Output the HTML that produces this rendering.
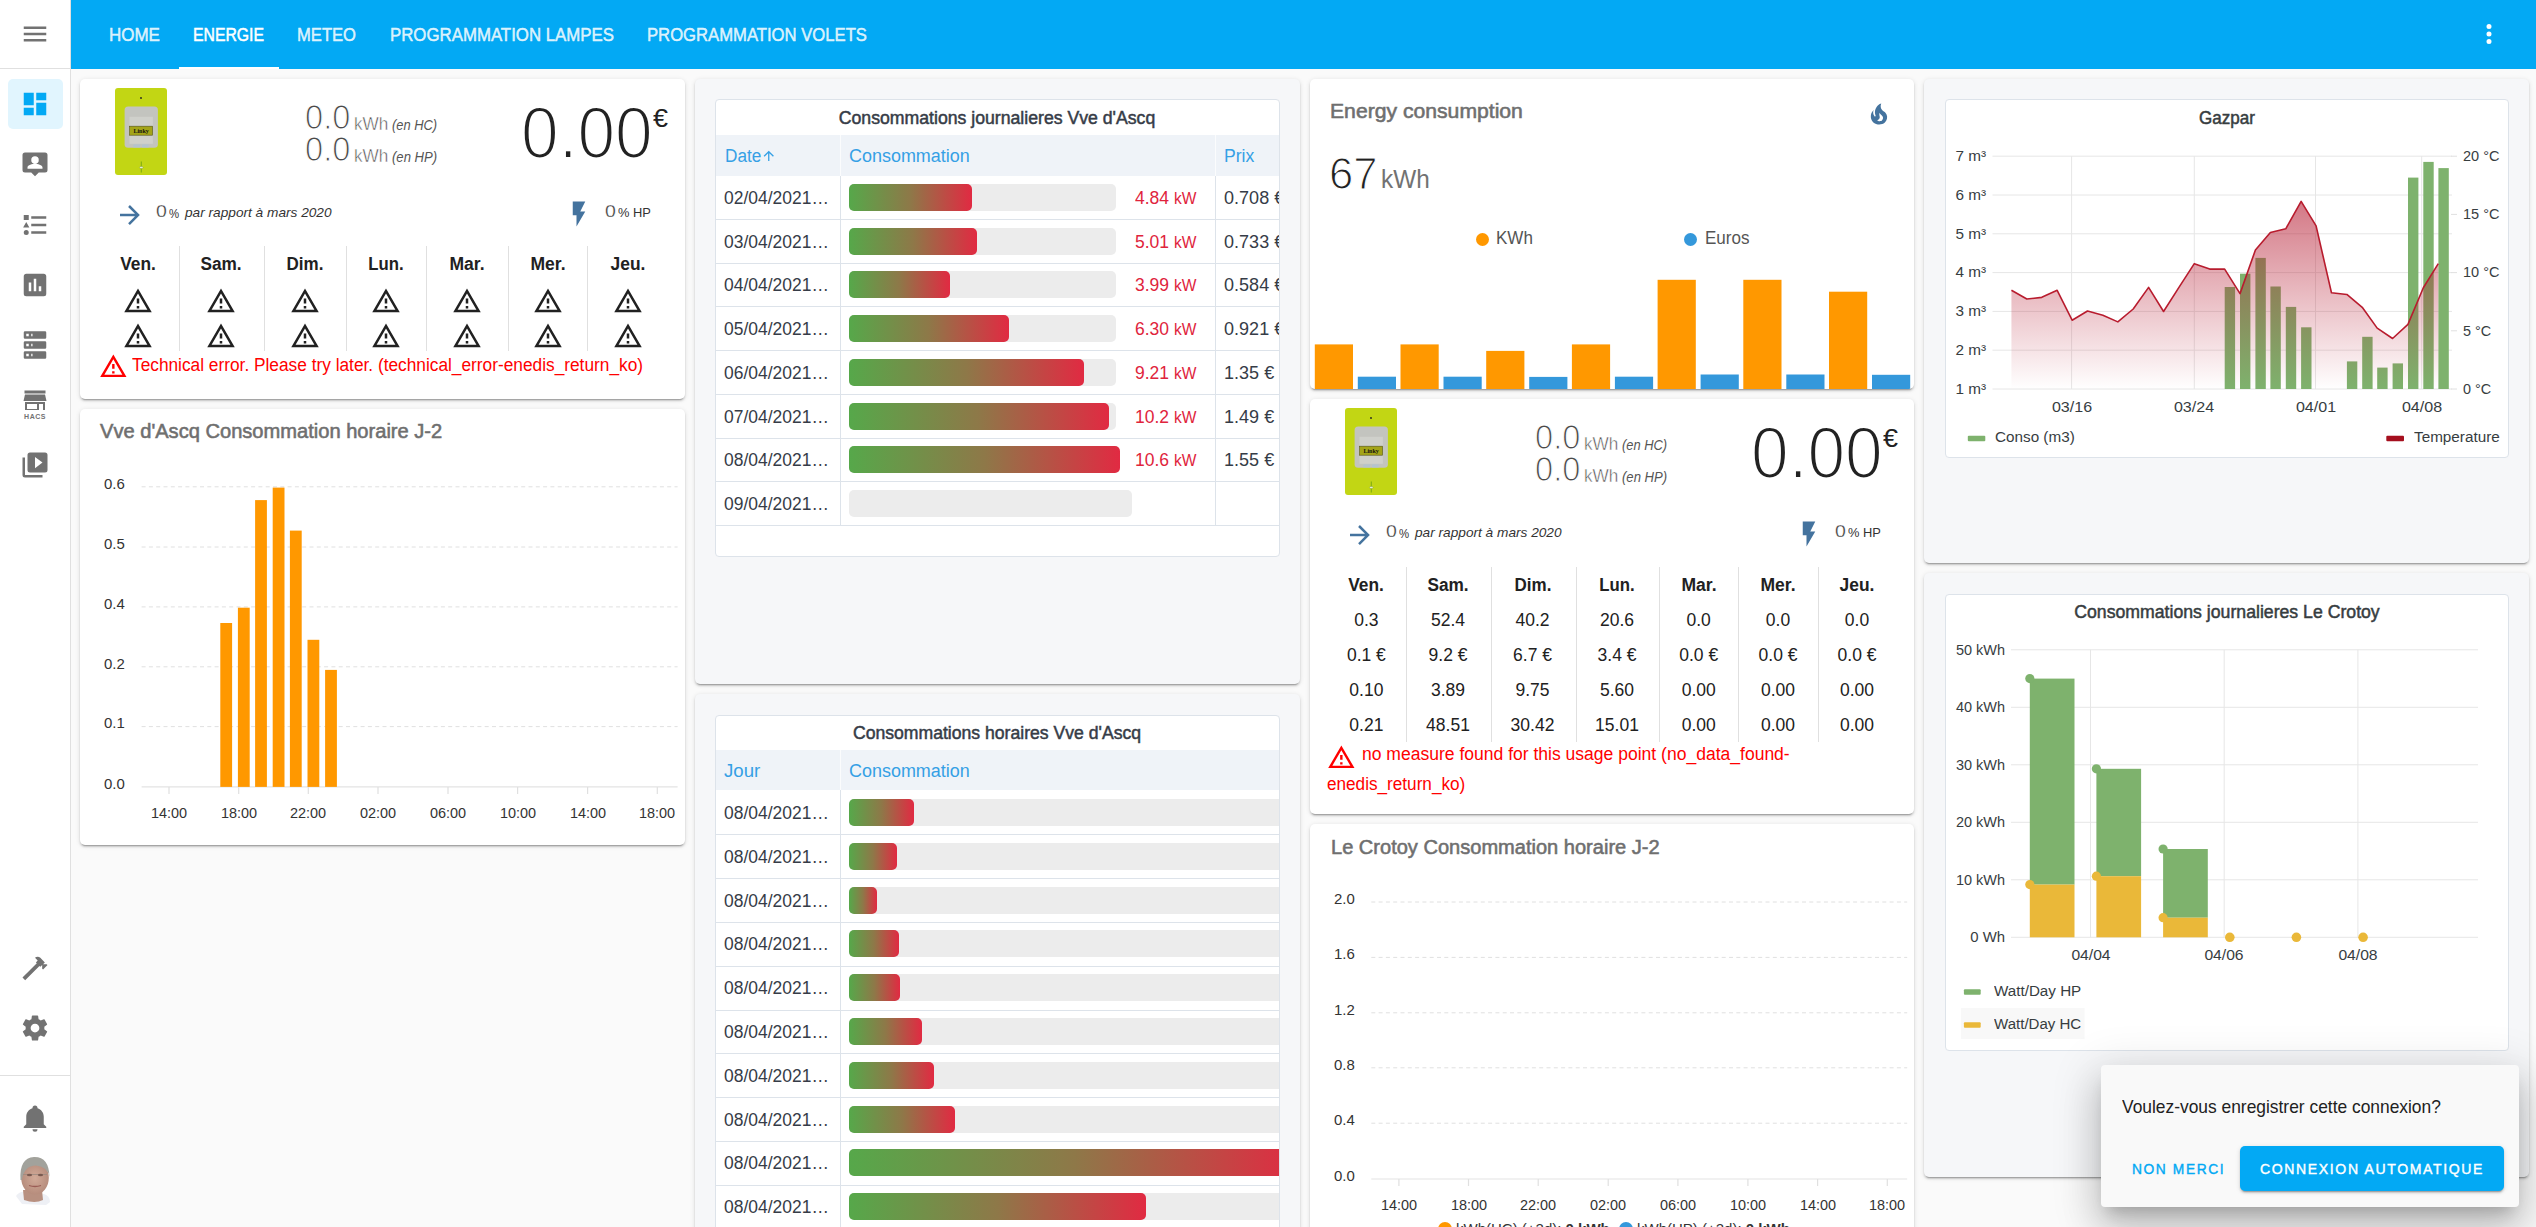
<!DOCTYPE html>
<html><head><meta charset="utf-8"><style>
html,body{margin:0;padding:0;width:2536px;height:1227px;overflow:hidden;background:#fafafa;font-family:"Liberation Sans", sans-serif;}
div,span{box-sizing:border-box;}
</style></head><body>
<div style="position:absolute;left:0.00px;top:0.00px;width:70.00px;height:1227.00px;background:#fff;"></div><div style="position:absolute;left:70.00px;top:0.00px;width:1.00px;height:1227.00px;background:#e0e0e0;"></div><div style="position:absolute;left:0.00px;top:68.00px;width:70.00px;height:1.00px;background:#e0e0e0;"></div><svg style="position:absolute;left:20.00px;top:19.00px;" width="30" height="30" viewBox="0 0 24 24"><path fill="#727272" d="M3,6H21V8H3V6M3,11H21V13H3V11M3,16H21V18H3V16Z"/></svg><div style="position:absolute;left:8.00px;top:79.00px;width:55.00px;height:50.00px;background:#e1f5fe;border-radius:5px;"></div><svg style="position:absolute;left:20.00px;top:89.00px;" width="30" height="30" viewBox="0 0 24 24"><path fill="#03a9f4" d="M13,3V9H21V3M13,21H21V11H13M3,21H11V15H3M3,13H11V3H3V13Z"/></svg><svg style="position:absolute;left:20.00px;top:149.50px;" width="30" height="30" viewBox="0 0 24 24"><path fill="#727272" d="M20,2H4A2,2 0 0,0 2,4V16A2,2 0 0,0 4,18H9L12,21L15,18H20A2,2 0 0,0 22,16V4A2,2 0 0,0 20,2M12,5A3,3 0 0,1 15,8A3,3 0 0,1 12,11A3,3 0 0,1 9,8A3,3 0 0,1 12,5M18,15H6V14C6,12 10,11 12,11C14,11 18,12 18,14V15Z"/></svg><svg style="position:absolute;left:20.00px;top:209.50px;" width="30" height="30" viewBox="0 0 24 24"><path fill="#727272" d="M5,9.5L7.5,14H2.5L5,9.5M3,4H7V8H3V4M5,20A2,2 0 0,0 7,18A2,2 0 0,0 5,16A2,2 0 0,0 3,18A2,2 0 0,0 5,20M9,5V7H21V5H9M9,19H21V17H9V19M9,13H21V11H9V13Z"/></svg><svg style="position:absolute;left:20.00px;top:270.00px;" width="30" height="30" viewBox="0 0 24 24"><path fill="#727272" d="M19,3H5C3.89,3 3,3.89 3,5V19A2,2 0 0,0 5,21H19A2,2 0 0,0 21,19V5C21,3.89 20.1,3 19,3M9,17H7V10H9V17M13,17H11V7H13V17M17,17H15V13H17V17Z"/></svg><svg style="position:absolute;left:20.00px;top:330.00px;" width="30" height="30" viewBox="0 0 24 24"><path fill="#727272" d="M4,1H20A1,1 0 0,1 21,2V6A1,1 0 0,1 20,7H4A1,1 0 0,1 3,6V2A1,1 0 0,1 4,1M4,9H20A1,1 0 0,1 21,10V14A1,1 0 0,1 20,15H4A1,1 0 0,1 3,14V10A1,1 0 0,1 4,9M4,17H20A1,1 0 0,1 21,18V22A1,1 0 0,1 20,23H4A1,1 0 0,1 3,22V18A1,1 0 0,1 4,17M9,5H10V3H9V5M9,13H10V11H9V13M9,21H10V19H9V21M5,3V5H7V3H5M5,11V13H7V11H5M5,19V21H7V19H5Z"/></svg><svg style="position:absolute;left:20.00px;top:388.00px;" width="30" height="34" viewBox="0 0 30 34"><rect x="4.5" y="2.5" width="21" height="3" fill="#727272"/>
<path d="M5 6.5H25L26.5 13H3.5Z" fill="#727272"/>
<rect x="5" y="14" width="20" height="8" fill="#727272"/>
<rect x="7" y="16" width="10" height="5" fill="#fff"/>
<rect x="19" y="16" width="4" height="6" fill="#fff"/>
<text x="15" y="31" font-family="Liberation Sans" font-weight="bold" font-size="7" text-anchor="middle" fill="#727272" letter-spacing="0.5">HACS</text></svg><svg style="position:absolute;left:20.00px;top:450.00px;" width="30" height="30" viewBox="0 0 24 24"><path fill="#727272" d="M4,6H2V20A2,2 0 0,0 4,22H18V20H4V6M20,2H8A2,2 0 0,0 6,4V16A2,2 0 0,0 8,18H20A2,2 0 0,0 22,16V4A2,2 0 0,0 20,2M12,14.5V5.5L18,10L12,14.5Z"/></svg><svg style="position:absolute;left:20.00px;top:953.00px;" width="30" height="30" viewBox="0 0 24 24"><path fill="#727272" d="M2,19.63L13.43,8.2L12.72,7.5L14.14,6.07L12,3.89C13.2,2.7 15.09,2.7 16.27,3.89L19.87,7.5L18.45,8.91H21.29L22,9.62L18.45,13.21L17.74,12.5V9.62L16.27,11.04L15.56,10.33L4.13,21.76L2,19.63Z"/></svg><svg style="position:absolute;left:20.00px;top:1013.00px;" width="30" height="30" viewBox="0 0 24 24"><path fill="#727272" d="M12,15.5A3.5,3.5 0 0,1 8.5,12A3.5,3.5 0 0,1 12,8.5A3.5,3.5 0 0,1 15.5,12A3.5,3.5 0 0,1 12,15.5M19.43,12.97C19.47,12.65 19.5,12.33 19.5,12C19.5,11.67 19.47,11.34 19.43,11L21.54,9.37C21.73,9.22 21.78,8.95 21.66,8.73L19.66,5.27C19.54,5.05 19.27,4.96 19.05,5.05L16.56,6.05C16.04,5.66 15.5,5.32 14.87,5.07L14.5,2.42C14.46,2.18 14.25,2 14,2H10C9.75,2 9.54,2.18 9.5,2.42L9.13,5.07C8.5,5.32 7.96,5.66 7.44,6.05L4.95,5.05C4.73,4.96 4.46,5.05 4.34,5.27L2.34,8.73C2.21,8.95 2.27,9.22 2.46,9.37L4.57,11C4.53,11.34 4.5,11.67 4.5,12C4.5,12.33 4.53,12.65 4.57,12.97L2.46,14.63C2.27,14.78 2.21,15.05 2.34,15.27L4.34,18.73C4.46,18.95 4.73,19.03 4.95,18.95L7.44,17.94C7.96,18.34 8.5,18.68 9.13,18.93L9.5,21.58C9.54,21.82 9.75,22 10,22H14C14.25,22 14.46,21.82 14.5,21.58L14.87,18.93C15.5,18.67 16.04,18.34 16.56,17.94L19.05,18.95C19.27,19.03 19.54,18.95 19.66,18.73L21.66,15.27C21.78,15.05 21.73,14.78 21.54,14.63L19.43,12.97Z"/></svg><div style="position:absolute;left:0.00px;top:1075.00px;width:70.00px;height:1.00px;background:#e0e0e0;"></div><svg style="position:absolute;left:20.00px;top:1103.00px;" width="30" height="30" viewBox="0 0 24 24"><path fill="#727272" d="M21,19V20H3V19L5,17V11C5,7.9 7.03,5.17 10,4.29C10,4.19 10,4.1 10,4A2,2 0 0,1 12,2A2,2 0 0,1 14,4C14,4.1 14,4.19 14,4.29C16.97,5.17 19,7.9 19,11V17L21,19M14,21A2,2 0 0,1 12,23A2,2 0 0,1 10,21"/></svg><svg style="position:absolute;left:10.00px;top:1150.00px;" width="50" height="60" viewBox="0 0 50 60">
<defs><radialGradient id="skin" cx="50%" cy="50%" r="55%"><stop offset="0" stop-color="#d2aa98"/><stop offset="1" stop-color="#b48a7a"/></radialGradient></defs>
<path d="M6 46 Q10 41 15 42 L34 44 Q40 46 40 52 L36 55 L12 54Z" fill="#eef0f5"/>
<path d="M13 40 L32 40 L33 50 Q25 54 14 50Z" fill="#b89080"/>
<ellipse cx="25" cy="28" rx="13.8" ry="16.5" fill="url(#skin)"/>
<path d="M10.5 30 Q9 8 24 7 Q39 6.5 39.5 27 Q38 17 26 15.5 Q14 15.5 12 30Z" fill="#a2a29c"/>
<path d="M13 24.5 H37" stroke="#9a8a80" stroke-width="0.8"/>
<ellipse cx="19.5" cy="25" rx="2.6" ry="1.2" fill="#7a5a50"/>
<ellipse cx="30.5" cy="25" rx="2.6" ry="1.2" fill="#7a5a50"/>
<path d="M19 35.5 Q25 37.5 31 35.5" stroke="#9a5d55" stroke-width="1.3" fill="none"/>
</svg><div style="position:absolute;left:71.00px;top:0.00px;width:2465.00px;height:69.00px;background:#03a9f4;"></div><div style="position:absolute;left:109.00px;top:25.90px;white-space:nowrap;font-size:18px;line-height:18px;color:rgba(255,255,255,0.82);font-weight:400;-webkit-text-stroke:0.50px rgba(255,255,255,0.82);transform:scaleX(0.9434);transform-origin:0 0;"><span id="t7598f7d98d">HOME</span></div><div style="position:absolute;left:193.20px;top:25.90px;white-space:nowrap;font-size:18px;line-height:18px;color:#fff;font-weight:400;-webkit-text-stroke:0.50px #fff;transform:scaleX(0.8755);transform-origin:0 0;"><span id="t44b9bff7a6">ENERGIE</span></div><div style="position:absolute;left:297.20px;top:25.90px;white-space:nowrap;font-size:18px;line-height:18px;color:rgba(255,255,255,0.82);font-weight:400;-webkit-text-stroke:0.50px rgba(255,255,255,0.82);transform:scaleX(0.9223);transform-origin:0 0;"><span id="t91ddcdd41f">METEO</span></div><div style="position:absolute;left:390.20px;top:25.90px;white-space:nowrap;font-size:18px;line-height:18px;color:rgba(255,255,255,0.82);font-weight:400;-webkit-text-stroke:0.50px rgba(255,255,255,0.82);transform:scaleX(0.9342);transform-origin:0 0;"><span id="tc95830f0d5">PROGRAMMATION LAMPES</span></div><div style="position:absolute;left:647.10px;top:25.90px;white-space:nowrap;font-size:18px;line-height:18px;color:rgba(255,255,255,0.82);font-weight:400;-webkit-text-stroke:0.50px rgba(255,255,255,0.82);transform:scaleX(0.9253);transform-origin:0 0;"><span id="ta40585232f">PROGRAMMATION VOLETS</span></div><div style="position:absolute;left:179.00px;top:66.50px;width:100.00px;height:2.50px;background:#fff;"></div><svg style="position:absolute;left:2474.00px;top:19.00px;" width="30" height="30" viewBox="0 0 24 24"><path fill="#fff" d="M12,16A2,2 0 0,1 14,18A2,2 0 0,1 12,20A2,2 0 0,1 10,18A2,2 0 0,1 12,16M12,10A2,2 0 0,1 14,12A2,2 0 0,1 12,14A2,2 0 0,1 10,12A2,2 0 0,1 12,10M12,4A2,2 0 0,1 14,6A2,2 0 0,1 12,8A2,2 0 0,1 10,6A2,2 0 0,1 12,4Z"/></svg><div style="position:absolute;left:80.00px;top:79.00px;width:605.00px;height:320.00px;background:#fff;box-shadow:0 2px 2px 0 rgba(0,0,0,0.14),0 1px 5px 0 rgba(0,0,0,0.12),0 3px 1px -2px rgba(0,0,0,0.2);border-radius:5px;"></div><div style="position:absolute;left:80.00px;top:409.00px;width:605.00px;height:436.00px;background:#fff;box-shadow:0 2px 2px 0 rgba(0,0,0,0.14),0 1px 5px 0 rgba(0,0,0,0.12),0 3px 1px -2px rgba(0,0,0,0.2);border-radius:5px;"></div><div style="position:absolute;left:695.00px;top:79.00px;width:605.00px;height:605.00px;background:#f6f7f9;box-shadow:0 2px 2px 0 rgba(0,0,0,0.14),0 1px 5px 0 rgba(0,0,0,0.12),0 3px 1px -2px rgba(0,0,0,0.2);border-radius:5px;"></div><div style="position:absolute;left:695.00px;top:694.00px;width:605.00px;height:600.00px;background:#f6f7f9;box-shadow:0 2px 2px 0 rgba(0,0,0,0.14),0 1px 5px 0 rgba(0,0,0,0.12),0 3px 1px -2px rgba(0,0,0,0.2);border-radius:5px;"></div><div style="position:absolute;left:1310.00px;top:79.00px;width:604.00px;height:310.00px;background:#fff;box-shadow:0 2px 2px 0 rgba(0,0,0,0.14),0 1px 5px 0 rgba(0,0,0,0.12),0 3px 1px -2px rgba(0,0,0,0.2);border-radius:5px;overflow:hidden;"></div><div style="position:absolute;left:1310.00px;top:399.00px;width:604.00px;height:415.00px;background:#fff;box-shadow:0 2px 2px 0 rgba(0,0,0,0.14),0 1px 5px 0 rgba(0,0,0,0.12),0 3px 1px -2px rgba(0,0,0,0.2);border-radius:5px;"></div><div style="position:absolute;left:1310.00px;top:824.00px;width:604.00px;height:500.00px;background:#fff;box-shadow:0 2px 2px 0 rgba(0,0,0,0.14),0 1px 5px 0 rgba(0,0,0,0.12),0 3px 1px -2px rgba(0,0,0,0.2);border-radius:5px;"></div><div style="position:absolute;left:1924.00px;top:79.00px;width:605.00px;height:484.00px;background:#f6f7f9;box-shadow:0 2px 2px 0 rgba(0,0,0,0.14),0 1px 5px 0 rgba(0,0,0,0.12),0 3px 1px -2px rgba(0,0,0,0.2);border-radius:5px;"></div><div style="position:absolute;left:1924.00px;top:573.00px;width:605.00px;height:604.00px;background:#f6f7f9;box-shadow:0 2px 2px 0 rgba(0,0,0,0.14),0 1px 5px 0 rgba(0,0,0,0.12),0 3px 1px -2px rgba(0,0,0,0.2);border-radius:5px;"></div><svg style="position:absolute;left:115.00px;top:87.80px;" width="52" height="87" viewBox="0 0 52 87"><rect x="0" y="0" width="52" height="87" rx="3" fill="#c2d614"/>
<rect x="9.6" y="18.4" width="33.3" height="41.4" rx="3.5" fill="#c3c4bf"/>
<rect x="14.5" y="28.8" width="23.4" height="27" fill="#cfd0cb"/>
<rect x="14.6" y="38.2" width="23" height="9" fill="#a4a418" stroke="#55551a" stroke-width="0.6"/>
<text x="26.1" y="45" font-family="Liberation Serif" font-weight="bold" font-size="6" text-anchor="middle" fill="#111">Linky</text>
<rect x="18.3" y="56.4" width="7" height="3" fill="#b5c3cf"/>
<rect x="27" y="56.4" width="6.6" height="3" fill="#b5c3cf"/>
<circle cx="26" cy="10" r="0.9" fill="#222"/>
<line x1="26.3" y1="73.5" x2="26.3" y2="84.5" stroke="#6aa010" stroke-width="0.8"/>
<ellipse cx="26.3" cy="79.5" rx="1.8" ry="1.1" fill="#e8eedd" stroke="#7a9a30" stroke-width="0.4"/></svg><div style="position:absolute;left:305.00px;top:100.37px;white-space:nowrap;font-size:34.5px;line-height:34.5px;color:#4a4a4a;font-weight:400;transform:scaleX(0.9456);transform-origin:0 0;-webkit-text-stroke:1.1px #fff;"><span id="t0196c07637">0.0</span></div><div style="position:absolute;left:354.00px;top:113.55px;white-space:nowrap;font-size:19px;line-height:19px;color:#4a4a4a;font-weight:400;transform:scaleX(0.9031);transform-origin:0 0;-webkit-text-stroke:0.55px #fff;"><span id="t2a356a2148">kWh</span></div><div style="position:absolute;left:391.70px;top:117.80px;white-space:nowrap;font-size:14px;line-height:14px;color:#555;font-weight:400;font-style:italic;transform:scaleX(0.9206);transform-origin:0 0;"><span id="t0342a851b9">(en HC)</span></div><div style="position:absolute;left:305.00px;top:132.48px;white-space:nowrap;font-size:34.5px;line-height:34.5px;color:#4a4a4a;font-weight:400;transform:scaleX(0.9456);transform-origin:0 0;-webkit-text-stroke:1.1px #fff;"><span id="t4cbf4c52d3">0.0</span></div><div style="position:absolute;left:354.00px;top:145.65px;white-space:nowrap;font-size:19px;line-height:19px;color:#4a4a4a;font-weight:400;transform:scaleX(0.9031);transform-origin:0 0;-webkit-text-stroke:0.55px #fff;"><span id="tf61f332b28">kWh</span></div><div style="position:absolute;left:391.70px;top:149.90px;white-space:nowrap;font-size:14px;line-height:14px;color:#555;font-weight:400;font-style:italic;transform:scaleX(0.9354);transform-origin:0 0;"><span id="t965da4ab9c">(en HP)</span></div><div style="position:absolute;left:520.70px;top:96.45px;white-space:nowrap;font-size:73px;line-height:73px;color:#222;font-weight:400;transform:scaleX(0.9272);transform-origin:0 0;-webkit-text-stroke:2.2px #fff;"><span id="tfa811fd8c3">0.00</span></div><div style="position:absolute;left:653.40px;top:104.60px;white-space:nowrap;font-size:26px;line-height:26px;color:#222;font-weight:400;transform:scaleX(1.0354);transform-origin:0 0;"><span id="t672ce63301">&euro;</span></div><svg style="position:absolute;left:114.90px;top:199.90px;" width="30" height="30" viewBox="0 0 24 24"><path fill="#44739e" d="M4,11V13H16L10.5,18.5L11.92,19.92L19.84,12L11.92,4.08L10.5,5.5L16,11H4Z"/></svg><div style="position:absolute;left:156.00px;top:203.25px;white-space:nowrap;font-size:17px;line-height:17px;color:#333;font-weight:400;transform:scaleX(1.1469);transform-origin:0 0;-webkit-text-stroke:0.3px #fff;"><span id="t581f64f4ad">0</span></div><div style="position:absolute;left:168.90px;top:206.65px;white-space:nowrap;font-size:13px;line-height:13px;color:#333;font-weight:400;transform:scaleX(0.8770);transform-origin:0 0;"><span id="t4128909561">%</span></div><div style="position:absolute;left:185.20px;top:206.22px;white-space:nowrap;font-size:13.5px;line-height:13.5px;color:#333;font-weight:400;font-style:italic;transform:scaleX(1.0120);transform-origin:0 0;"><span id="tb2a0189750">par rapport à mars 2020</span></div><svg style="position:absolute;left:564.00px;top:198.70px;" width="30" height="30" viewBox="0 0 24 24"><path fill="#44739e" d="M7,2V13H10V22L17,10H13L17,2H7Z"/></svg><div style="position:absolute;left:605.10px;top:203.25px;white-space:nowrap;font-size:17px;line-height:17px;color:#333;font-weight:400;transform:scaleX(1.1469);transform-origin:0 0;-webkit-text-stroke:0.3px #fff;"><span id="t3b64904714">0</span></div><div style="position:absolute;left:618.00px;top:206.22px;white-space:nowrap;font-size:13.5px;line-height:13.5px;color:#333;font-weight:400;transform:scaleX(0.9526);transform-origin:0 0;"><span id="t8314f0d433">% HP</span></div><div style="position:absolute;left:178.50px;top:246.00px;width:1.00px;height:104.60px;background:#e0e0e0;"></div><div style="position:absolute;left:264.40px;top:246.00px;width:1.00px;height:104.60px;background:#e0e0e0;"></div><div style="position:absolute;left:346.30px;top:246.00px;width:1.00px;height:104.60px;background:#e0e0e0;"></div><div style="position:absolute;left:426.30px;top:246.00px;width:1.00px;height:104.60px;background:#e0e0e0;"></div><div style="position:absolute;left:507.60px;top:246.00px;width:1.00px;height:104.60px;background:#e0e0e0;"></div><div style="position:absolute;left:587.40px;top:246.00px;width:1.00px;height:104.60px;background:#e0e0e0;"></div><div style="position:absolute;left:-462.40px;width:1200px;text-align:center;top:254.70px;white-space:nowrap;font-size:18px;line-height:18px;color:#212121;font-weight:700;transform:scaleX(0.9625);transform-origin:50% 0;"><span id="tf6460a4adc">Ven.</span></div><div style="position:absolute;left:-379.50px;width:1200px;text-align:center;top:254.70px;white-space:nowrap;font-size:18px;line-height:18px;color:#212121;font-weight:700;transform:scaleX(0.9560);transform-origin:50% 0;"><span id="t96c1a2519f">Sam.</span></div><div style="position:absolute;left:-294.70px;width:1200px;text-align:center;top:254.70px;white-space:nowrap;font-size:18px;line-height:18px;color:#212121;font-weight:700;transform:scaleX(0.9442);transform-origin:50% 0;"><span id="t88f8ee439b">Dim.</span></div><div style="position:absolute;left:-213.70px;width:1200px;text-align:center;top:254.70px;white-space:nowrap;font-size:18px;line-height:18px;color:#212121;font-weight:700;transform:scaleX(0.9300);transform-origin:50% 0;"><span id="t9fb34ac3a5">Lun.</span></div><div style="position:absolute;left:-133.10px;width:1200px;text-align:center;top:254.70px;white-space:nowrap;font-size:18px;line-height:18px;color:#212121;font-weight:700;transform:scaleX(0.9725);transform-origin:50% 0;"><span id="t6a7eefc156">Mar.</span></div><div style="position:absolute;left:-52.50px;width:1200px;text-align:center;top:254.70px;white-space:nowrap;font-size:18px;line-height:18px;color:#212121;font-weight:700;transform:scaleX(0.9725);transform-origin:50% 0;"><span id="t0b44b48954">Mer.</span></div><div style="position:absolute;left:27.60px;width:1200px;text-align:center;top:254.70px;white-space:nowrap;font-size:18px;line-height:18px;color:#212121;font-weight:700;transform:scaleX(0.9670);transform-origin:50% 0;"><span id="tdad6148edd">Jeu.</span></div><svg style="position:absolute;left:122.60px;top:286.40px;" width="30" height="30" viewBox="0 0 24 24"><path fill="#212121" d="M12,2L1,21H23M12,6L19.53,19H4.47M11,10V14H13V10M11,16V18H13V16"/></svg><svg style="position:absolute;left:205.50px;top:286.40px;" width="30" height="30" viewBox="0 0 24 24"><path fill="#212121" d="M12,2L1,21H23M12,6L19.53,19H4.47M11,10V14H13V10M11,16V18H13V16"/></svg><svg style="position:absolute;left:290.30px;top:286.40px;" width="30" height="30" viewBox="0 0 24 24"><path fill="#212121" d="M12,2L1,21H23M12,6L19.53,19H4.47M11,10V14H13V10M11,16V18H13V16"/></svg><svg style="position:absolute;left:371.30px;top:286.40px;" width="30" height="30" viewBox="0 0 24 24"><path fill="#212121" d="M12,2L1,21H23M12,6L19.53,19H4.47M11,10V14H13V10M11,16V18H13V16"/></svg><svg style="position:absolute;left:451.90px;top:286.40px;" width="30" height="30" viewBox="0 0 24 24"><path fill="#212121" d="M12,2L1,21H23M12,6L19.53,19H4.47M11,10V14H13V10M11,16V18H13V16"/></svg><svg style="position:absolute;left:532.50px;top:286.40px;" width="30" height="30" viewBox="0 0 24 24"><path fill="#212121" d="M12,2L1,21H23M12,6L19.53,19H4.47M11,10V14H13V10M11,16V18H13V16"/></svg><svg style="position:absolute;left:612.60px;top:286.40px;" width="30" height="30" viewBox="0 0 24 24"><path fill="#212121" d="M12,2L1,21H23M12,6L19.53,19H4.47M11,10V14H13V10M11,16V18H13V16"/></svg><svg style="position:absolute;left:122.60px;top:320.80px;" width="30" height="30" viewBox="0 0 24 24"><path fill="#212121" d="M12,2L1,21H23M12,6L19.53,19H4.47M11,10V14H13V10M11,16V18H13V16"/></svg><svg style="position:absolute;left:205.50px;top:320.80px;" width="30" height="30" viewBox="0 0 24 24"><path fill="#212121" d="M12,2L1,21H23M12,6L19.53,19H4.47M11,10V14H13V10M11,16V18H13V16"/></svg><svg style="position:absolute;left:290.30px;top:320.80px;" width="30" height="30" viewBox="0 0 24 24"><path fill="#212121" d="M12,2L1,21H23M12,6L19.53,19H4.47M11,10V14H13V10M11,16V18H13V16"/></svg><svg style="position:absolute;left:371.30px;top:320.80px;" width="30" height="30" viewBox="0 0 24 24"><path fill="#212121" d="M12,2L1,21H23M12,6L19.53,19H4.47M11,10V14H13V10M11,16V18H13V16"/></svg><svg style="position:absolute;left:451.90px;top:320.80px;" width="30" height="30" viewBox="0 0 24 24"><path fill="#212121" d="M12,2L1,21H23M12,6L19.53,19H4.47M11,10V14H13V10M11,16V18H13V16"/></svg><svg style="position:absolute;left:532.50px;top:320.80px;" width="30" height="30" viewBox="0 0 24 24"><path fill="#212121" d="M12,2L1,21H23M12,6L19.53,19H4.47M11,10V14H13V10M11,16V18H13V16"/></svg><svg style="position:absolute;left:612.60px;top:320.80px;" width="30" height="30" viewBox="0 0 24 24"><path fill="#212121" d="M12,2L1,21H23M12,6L19.53,19H4.47M11,10V14H13V10M11,16V18H13V16"/></svg><svg style="position:absolute;left:98.80px;top:351.90px;" width="28.7" height="28.7" viewBox="0 0 24 24"><path fill="#ff0000" d="M12,2L1,21H23M12,6L19.53,19H4.47M11,10V14H13V10M11,16V18H13V16"/></svg><div style="position:absolute;left:132.40px;top:355.50px;white-space:nowrap;font-size:18px;line-height:18px;color:#ff0000;font-weight:400;transform:scaleX(0.9601);transform-origin:0 0;"><span id="t21a5c935b4">Technical error. Please try later. (technical_error-enedis_return_ko)</span></div><svg style="position:absolute;left:1345.00px;top:407.80px;" width="52" height="87" viewBox="0 0 52 87"><rect x="0" y="0" width="52" height="87" rx="3" fill="#c2d614"/>
<rect x="9.6" y="18.4" width="33.3" height="41.4" rx="3.5" fill="#c3c4bf"/>
<rect x="14.5" y="28.8" width="23.4" height="27" fill="#cfd0cb"/>
<rect x="14.6" y="38.2" width="23" height="9" fill="#a4a418" stroke="#55551a" stroke-width="0.6"/>
<text x="26.1" y="45" font-family="Liberation Serif" font-weight="bold" font-size="6" text-anchor="middle" fill="#111">Linky</text>
<rect x="18.3" y="56.4" width="7" height="3" fill="#b5c3cf"/>
<rect x="27" y="56.4" width="6.6" height="3" fill="#b5c3cf"/>
<circle cx="26" cy="10" r="0.9" fill="#222"/>
<line x1="26.3" y1="73.5" x2="26.3" y2="84.5" stroke="#6aa010" stroke-width="0.8"/>
<ellipse cx="26.3" cy="79.5" rx="1.8" ry="1.1" fill="#e8eedd" stroke="#7a9a30" stroke-width="0.4"/></svg><div style="position:absolute;left:1535.00px;top:420.38px;white-space:nowrap;font-size:34.5px;line-height:34.5px;color:#4a4a4a;font-weight:400;transform:scaleX(0.9457);transform-origin:0 0;-webkit-text-stroke:1.1px #fff;"><span id="t2e1fcd0cf9">0.0</span></div><div style="position:absolute;left:1584.00px;top:433.55px;white-space:nowrap;font-size:19px;line-height:19px;color:#4a4a4a;font-weight:400;transform:scaleX(0.9031);transform-origin:0 0;-webkit-text-stroke:0.55px #fff;"><span id="ta3caee9c96">kWh</span></div><div style="position:absolute;left:1621.70px;top:437.80px;white-space:nowrap;font-size:14px;line-height:14px;color:#555;font-weight:400;font-style:italic;transform:scaleX(0.9206);transform-origin:0 0;"><span id="t64fc51c76d">(en HC)</span></div><div style="position:absolute;left:1535.00px;top:452.48px;white-space:nowrap;font-size:34.5px;line-height:34.5px;color:#4a4a4a;font-weight:400;transform:scaleX(0.9457);transform-origin:0 0;-webkit-text-stroke:1.1px #fff;"><span id="t5b13ad2c04">0.0</span></div><div style="position:absolute;left:1584.00px;top:465.65px;white-space:nowrap;font-size:19px;line-height:19px;color:#4a4a4a;font-weight:400;transform:scaleX(0.9031);transform-origin:0 0;-webkit-text-stroke:0.55px #fff;"><span id="t6084ea0ff1">kWh</span></div><div style="position:absolute;left:1621.70px;top:469.90px;white-space:nowrap;font-size:14px;line-height:14px;color:#555;font-weight:400;font-style:italic;transform:scaleX(0.9354);transform-origin:0 0;"><span id="t042e64df22">(en HP)</span></div><div style="position:absolute;left:1750.70px;top:416.45px;white-space:nowrap;font-size:73px;line-height:73px;color:#222;font-weight:400;transform:scaleX(0.9272);transform-origin:0 0;-webkit-text-stroke:2.2px #fff;"><span id="t6e891616cb">0.00</span></div><div style="position:absolute;left:1883.40px;top:424.60px;white-space:nowrap;font-size:26px;line-height:26px;color:#222;font-weight:400;transform:scaleX(1.0354);transform-origin:0 0;"><span id="t9d3ad53ad9">&euro;</span></div><svg style="position:absolute;left:1344.90px;top:519.90px;" width="30" height="30" viewBox="0 0 24 24"><path fill="#44739e" d="M4,11V13H16L10.5,18.5L11.92,19.92L19.84,12L11.92,4.08L10.5,5.5L16,11H4Z"/></svg><div style="position:absolute;left:1386.00px;top:523.25px;white-space:nowrap;font-size:17px;line-height:17px;color:#333;font-weight:400;transform:scaleX(1.1469);transform-origin:0 0;-webkit-text-stroke:0.3px #fff;"><span id="t8b4cafc55f">0</span></div><div style="position:absolute;left:1398.90px;top:526.65px;white-space:nowrap;font-size:13px;line-height:13px;color:#333;font-weight:400;transform:scaleX(0.8770);transform-origin:0 0;"><span id="t17aeaeee28">%</span></div><div style="position:absolute;left:1415.20px;top:526.23px;white-space:nowrap;font-size:13.5px;line-height:13.5px;color:#333;font-weight:400;font-style:italic;transform:scaleX(1.0120);transform-origin:0 0;"><span id="t3ed280b055">par rapport à mars 2020</span></div><svg style="position:absolute;left:1794.00px;top:518.70px;" width="30" height="30" viewBox="0 0 24 24"><path fill="#44739e" d="M7,2V13H10V22L17,10H13L17,2H7Z"/></svg><div style="position:absolute;left:1835.10px;top:523.25px;white-space:nowrap;font-size:17px;line-height:17px;color:#333;font-weight:400;transform:scaleX(1.1469);transform-origin:0 0;-webkit-text-stroke:0.3px #fff;"><span id="td92f3d93db">0</span></div><div style="position:absolute;left:1848.00px;top:526.23px;white-space:nowrap;font-size:13.5px;line-height:13.5px;color:#333;font-weight:400;transform:scaleX(0.9526);transform-origin:0 0;"><span id="tc9881cb0ed">% HP</span></div><div style="position:absolute;left:1405.50px;top:567.00px;width:1.00px;height:174.50px;background:#e0e0e0;"></div><div style="position:absolute;left:1490.50px;top:567.00px;width:1.00px;height:174.50px;background:#e0e0e0;"></div><div style="position:absolute;left:1575.60px;top:567.00px;width:1.00px;height:174.50px;background:#e0e0e0;"></div><div style="position:absolute;left:1659.30px;top:567.00px;width:1.00px;height:174.50px;background:#e0e0e0;"></div><div style="position:absolute;left:1738.10px;top:567.00px;width:1.00px;height:174.50px;background:#e0e0e0;"></div><div style="position:absolute;left:1818.10px;top:567.00px;width:1.00px;height:174.50px;background:#e0e0e0;"></div><div style="position:absolute;left:766.40px;width:1200px;text-align:center;top:575.60px;white-space:nowrap;font-size:18px;line-height:18px;color:#212121;font-weight:700;transform:scaleX(0.9625);transform-origin:50% 0;"><span id="t6be740808e">Ven.</span></div><div style="position:absolute;left:848.00px;width:1200px;text-align:center;top:575.60px;white-space:nowrap;font-size:18px;line-height:18px;color:#212121;font-weight:700;transform:scaleX(0.9560);transform-origin:50% 0;"><span id="t1a9f3c07f5">Sam.</span></div><div style="position:absolute;left:932.50px;width:1200px;text-align:center;top:575.60px;white-space:nowrap;font-size:18px;line-height:18px;color:#212121;font-weight:700;transform:scaleX(0.9442);transform-origin:50% 0;"><span id="t2f0d57bc89">Dim.</span></div><div style="position:absolute;left:1017.00px;width:1200px;text-align:center;top:575.60px;white-space:nowrap;font-size:18px;line-height:18px;color:#212121;font-weight:700;transform:scaleX(0.9300);transform-origin:50% 0;"><span id="te6d781724a">Lun.</span></div><div style="position:absolute;left:1098.70px;width:1200px;text-align:center;top:575.60px;white-space:nowrap;font-size:18px;line-height:18px;color:#212121;font-weight:700;transform:scaleX(0.9725);transform-origin:50% 0;"><span id="tf710180499">Mar.</span></div><div style="position:absolute;left:1178.00px;width:1200px;text-align:center;top:575.60px;white-space:nowrap;font-size:18px;line-height:18px;color:#212121;font-weight:700;transform:scaleX(0.9725);transform-origin:50% 0;"><span id="t60cd2c437a">Mer.</span></div><div style="position:absolute;left:1257.00px;width:1200px;text-align:center;top:575.60px;white-space:nowrap;font-size:18px;line-height:18px;color:#212121;font-weight:700;transform:scaleX(0.9669);transform-origin:50% 0;"><span id="t364fad82cb">Jeu.</span></div><div style="position:absolute;left:766.40px;width:1200px;text-align:center;top:612.12px;white-space:nowrap;font-size:17.5px;line-height:17.5px;color:#212121;font-weight:400;"><span id="tafc516fc1a">0.3</span></div><div style="position:absolute;left:848.00px;width:1200px;text-align:center;top:612.12px;white-space:nowrap;font-size:17.5px;line-height:17.5px;color:#212121;font-weight:400;"><span id="td3a83b1f46">52.4</span></div><div style="position:absolute;left:932.50px;width:1200px;text-align:center;top:612.12px;white-space:nowrap;font-size:17.5px;line-height:17.5px;color:#212121;font-weight:400;"><span id="t258a9fe485">40.2</span></div><div style="position:absolute;left:1017.00px;width:1200px;text-align:center;top:612.12px;white-space:nowrap;font-size:17.5px;line-height:17.5px;color:#212121;font-weight:400;"><span id="t63c8ace3f9">20.6</span></div><div style="position:absolute;left:1098.70px;width:1200px;text-align:center;top:612.12px;white-space:nowrap;font-size:17.5px;line-height:17.5px;color:#212121;font-weight:400;"><span id="t79cd677b54">0.0</span></div><div style="position:absolute;left:1178.00px;width:1200px;text-align:center;top:612.12px;white-space:nowrap;font-size:17.5px;line-height:17.5px;color:#212121;font-weight:400;"><span id="tc3be2d81cd">0.0</span></div><div style="position:absolute;left:1257.00px;width:1200px;text-align:center;top:612.12px;white-space:nowrap;font-size:17.5px;line-height:17.5px;color:#212121;font-weight:400;"><span id="t85ca80f0cf">0.0</span></div><div style="position:absolute;left:766.40px;width:1200px;text-align:center;top:647.33px;white-space:nowrap;font-size:17.5px;line-height:17.5px;color:#212121;font-weight:400;"><span id="t893a6fce69">0.1 €</span></div><div style="position:absolute;left:848.00px;width:1200px;text-align:center;top:647.33px;white-space:nowrap;font-size:17.5px;line-height:17.5px;color:#212121;font-weight:400;"><span id="t2af0d885cf">9.2 €</span></div><div style="position:absolute;left:932.50px;width:1200px;text-align:center;top:647.33px;white-space:nowrap;font-size:17.5px;line-height:17.5px;color:#212121;font-weight:400;"><span id="t008dd0f93c">6.7 €</span></div><div style="position:absolute;left:1017.00px;width:1200px;text-align:center;top:647.33px;white-space:nowrap;font-size:17.5px;line-height:17.5px;color:#212121;font-weight:400;"><span id="t36c9a91d09">3.4 €</span></div><div style="position:absolute;left:1098.70px;width:1200px;text-align:center;top:647.33px;white-space:nowrap;font-size:17.5px;line-height:17.5px;color:#212121;font-weight:400;"><span id="teb3f1d1348">0.0 €</span></div><div style="position:absolute;left:1178.00px;width:1200px;text-align:center;top:647.33px;white-space:nowrap;font-size:17.5px;line-height:17.5px;color:#212121;font-weight:400;"><span id="td8e54e12d6">0.0 €</span></div><div style="position:absolute;left:1257.00px;width:1200px;text-align:center;top:647.33px;white-space:nowrap;font-size:17.5px;line-height:17.5px;color:#212121;font-weight:400;"><span id="tf78b863059">0.0 €</span></div><div style="position:absolute;left:766.40px;width:1200px;text-align:center;top:681.62px;white-space:nowrap;font-size:17.5px;line-height:17.5px;color:#212121;font-weight:400;"><span id="tc41653959e">0.10</span></div><div style="position:absolute;left:848.00px;width:1200px;text-align:center;top:681.62px;white-space:nowrap;font-size:17.5px;line-height:17.5px;color:#212121;font-weight:400;"><span id="t754322c5ba">3.89</span></div><div style="position:absolute;left:932.50px;width:1200px;text-align:center;top:681.62px;white-space:nowrap;font-size:17.5px;line-height:17.5px;color:#212121;font-weight:400;"><span id="t45202039bc">9.75</span></div><div style="position:absolute;left:1017.00px;width:1200px;text-align:center;top:681.62px;white-space:nowrap;font-size:17.5px;line-height:17.5px;color:#212121;font-weight:400;"><span id="t4f4d8b5a19">5.60</span></div><div style="position:absolute;left:1098.70px;width:1200px;text-align:center;top:681.62px;white-space:nowrap;font-size:17.5px;line-height:17.5px;color:#212121;font-weight:400;"><span id="t88873a8ed8">0.00</span></div><div style="position:absolute;left:1178.00px;width:1200px;text-align:center;top:681.62px;white-space:nowrap;font-size:17.5px;line-height:17.5px;color:#212121;font-weight:400;"><span id="t2d543f8b95">0.00</span></div><div style="position:absolute;left:1257.00px;width:1200px;text-align:center;top:681.62px;white-space:nowrap;font-size:17.5px;line-height:17.5px;color:#212121;font-weight:400;"><span id="tc2905abbbd">0.00</span></div><div style="position:absolute;left:766.40px;width:1200px;text-align:center;top:716.83px;white-space:nowrap;font-size:17.5px;line-height:17.5px;color:#212121;font-weight:400;"><span id="t44bb31437d">0.21</span></div><div style="position:absolute;left:848.00px;width:1200px;text-align:center;top:716.83px;white-space:nowrap;font-size:17.5px;line-height:17.5px;color:#212121;font-weight:400;"><span id="t846b8ae680">48.51</span></div><div style="position:absolute;left:932.50px;width:1200px;text-align:center;top:716.83px;white-space:nowrap;font-size:17.5px;line-height:17.5px;color:#212121;font-weight:400;"><span id="t2e6b9988c9">30.42</span></div><div style="position:absolute;left:1017.00px;width:1200px;text-align:center;top:716.83px;white-space:nowrap;font-size:17.5px;line-height:17.5px;color:#212121;font-weight:400;"><span id="t80de292d3e">15.01</span></div><div style="position:absolute;left:1098.70px;width:1200px;text-align:center;top:716.83px;white-space:nowrap;font-size:17.5px;line-height:17.5px;color:#212121;font-weight:400;"><span id="t0bc02bed2e">0.00</span></div><div style="position:absolute;left:1178.00px;width:1200px;text-align:center;top:716.83px;white-space:nowrap;font-size:17.5px;line-height:17.5px;color:#212121;font-weight:400;"><span id="t5c994eec59">0.00</span></div><div style="position:absolute;left:1257.00px;width:1200px;text-align:center;top:716.83px;white-space:nowrap;font-size:17.5px;line-height:17.5px;color:#212121;font-weight:400;"><span id="tfc578c9d94">0.00</span></div><svg style="position:absolute;left:1327.00px;top:743.00px;" width="28.7" height="28.7" viewBox="0 0 24 24"><path fill="#ff0000" d="M12,2L1,21H23M12,6L19.53,19H4.47M11,10V14H13V10M11,16V18H13V16"/></svg><div style="position:absolute;left:1362.00px;top:745.20px;white-space:nowrap;font-size:18px;line-height:18px;color:#ff0000;font-weight:400;transform:scaleX(0.9736);transform-origin:0 0;"><span id="tc820e15eed">no measure found for this usage point (no_data_found-</span></div><div style="position:absolute;left:1327.40px;top:774.50px;white-space:nowrap;font-size:18px;line-height:18px;color:#ff0000;font-weight:400;transform:scaleX(0.9528);transform-origin:0 0;"><span id="t27878294d1">enedis_return_ko)</span></div><div style="position:absolute;left:1330.10px;top:101.30px;white-space:nowrap;font-size:20px;line-height:20px;color:#6f6f6f;font-weight:400;-webkit-text-stroke:0.56px #6f6f6f;transform:scaleX(1.0579);transform-origin:0 0;"><span id="t2cc8e0cd34">Energy consumption</span></div><svg style="position:absolute;left:1865.00px;top:99.50px;" width="28" height="28" viewBox="0 0 24 24"><path fill="#44739e" d="M17.66,11.2C17.43,10.9 17.15,10.64 16.89,10.38C16.22,9.78 15.46,9.35 14.82,8.72C13.33,7.26 13,4.85 13.95,3C13,3.23 12.17,3.75 11.46,4.32C8.87,6.4 7.85,10.07 9.07,13.22C9.11,13.32 9.15,13.42 9.15,13.55C9.15,13.77 9,13.97 8.8,14.05C8.57,14.15 8.33,14.09 8.14,13.93C8.08,13.88 8.04,13.83 8,13.76C6.87,12.33 6.69,10.28 7.45,8.64C5.78,10 4.87,12.3 5,14.47C5.06,14.97 5.12,15.47 5.29,15.97C5.43,16.57 5.7,17.17 6,17.7C7.08,19.43 8.95,20.67 10.96,20.92C13.1,21.19 15.39,20.8 17.03,19.32C18.86,17.66 19.5,15 18.56,12.72L18.43,12.46C18.22,12 17.66,11.2 17.66,11.2M14.5,17.5C14.22,17.74 13.76,18 13.4,18.1C12.28,18.5 11.16,17.94 10.5,17.28C11.69,17 12.4,16.12 12.61,15.23C12.78,14.43 12.46,13.77 12.33,13C12.21,12.26 12.23,11.63 12.5,10.94C12.69,11.32 12.89,11.7 13.13,12C13.9,13 15.11,13.44 15.37,14.8C15.41,14.94 15.43,15.08 15.43,15.23C15.46,16.05 15.1,16.95 14.5,17.5H14.5Z"/></svg><div style="position:absolute;left:1329.00px;top:151.60px;white-space:nowrap;font-size:44px;line-height:44px;color:#212121;font-weight:400;transform:scaleX(0.9912);transform-origin:0 0;-webkit-text-stroke:1.2px #fff;"><span id="tb991e5ceda">67</span></div><div style="position:absolute;left:1381.20px;top:166.07px;white-space:nowrap;font-size:26.5px;line-height:26.5px;color:#727272;font-weight:400;transform:scaleX(0.9192);transform-origin:0 0;"><span id="t34ef893f6c">kWh</span></div><div style="position:absolute;left:1475.5px;top:232.5px;width:13px;height:13px;border-radius:50%;background:#ff9800;"></div><div style="position:absolute;left:1495.90px;top:230.03px;white-space:nowrap;font-size:17.5px;line-height:17.5px;color:#555;font-weight:400;transform:scaleX(0.9727);transform-origin:0 0;"><span id="tb82cfc5afc">KWh</span></div><div style="position:absolute;left:1684px;top:232.5px;width:13px;height:13px;border-radius:50%;background:#3498db;"></div><div style="position:absolute;left:1704.90px;top:230.03px;white-space:nowrap;font-size:17.5px;line-height:17.5px;color:#555;font-weight:400;transform:scaleX(0.9733);transform-origin:0 0;"><span id="te137188fb0">Euros</span></div><div style="position:absolute;left:1310px;top:79px;width:604px;height:310px;overflow:hidden;border-radius:5px;"><svg width="604" height="310" style="position:absolute;left:0;top:0"><rect x="4.80" y="265.40" width="38.2" height="49.60" fill="#ff9800"/><rect x="47.80" y="297.70" width="38.2" height="17.30" fill="#3498db"/><rect x="90.50" y="265.40" width="38.2" height="49.60" fill="#ff9800"/><rect x="133.50" y="297.70" width="38.2" height="17.30" fill="#3498db"/><rect x="176.20" y="271.90" width="38.2" height="43.10" fill="#ff9800"/><rect x="219.20" y="297.90" width="38.2" height="17.10" fill="#3498db"/><rect x="261.90" y="265.40" width="38.2" height="49.60" fill="#ff9800"/><rect x="304.90" y="297.70" width="38.2" height="17.30" fill="#3498db"/><rect x="347.60" y="200.80" width="38.2" height="114.20" fill="#ff9800"/><rect x="390.60" y="295.50" width="38.2" height="19.50" fill="#3498db"/><rect x="433.30" y="200.80" width="38.2" height="114.20" fill="#ff9800"/><rect x="476.30" y="295.50" width="38.2" height="19.50" fill="#3498db"/><rect x="519.00" y="212.70" width="38.2" height="102.30" fill="#ff9800"/><rect x="562.00" y="295.80" width="38.2" height="19.20" fill="#3498db"/></svg></div><div style="position:absolute;left:100.40px;top:420.70px;white-space:nowrap;font-size:20px;line-height:20px;color:#6f6f6f;font-weight:400;-webkit-text-stroke:0.56px #6f6f6f;transform:scaleX(1.0046);transform-origin:0 0;"><span id="t7d0bf05fa0">Vve d'Ascq Consommation horaire J-2</span></div><svg style="position:absolute;left:0;top:0" width="2536" height="1227"><line x1="141.6" y1="486.8" x2="677.6" y2="486.8" stroke="#e0e0e0" stroke-width="1" stroke-dasharray="4 3.3"/><line x1="141.6" y1="547" x2="677.6" y2="547" stroke="#e0e0e0" stroke-width="1" stroke-dasharray="4 3.3"/><line x1="141.6" y1="606.9" x2="677.6" y2="606.9" stroke="#e0e0e0" stroke-width="1" stroke-dasharray="4 3.3"/><line x1="141.6" y1="666.8" x2="677.6" y2="666.8" stroke="#e0e0e0" stroke-width="1" stroke-dasharray="4 3.3"/><line x1="141.6" y1="726.6" x2="677.6" y2="726.6" stroke="#e0e0e0" stroke-width="1" stroke-dasharray="4 3.3"/><line x1="141.6" y1="786.9" x2="677.6" y2="786.9" stroke="#e3e3e3" stroke-width="1.2"/><line x1="169" y1="786.9" x2="169" y2="794" stroke="#e0e0e0" stroke-width="1.2"/><line x1="238.7" y1="786.9" x2="238.7" y2="794" stroke="#e0e0e0" stroke-width="1.2"/><line x1="308.3" y1="786.9" x2="308.3" y2="794" stroke="#e0e0e0" stroke-width="1.2"/><line x1="378" y1="786.9" x2="378" y2="794" stroke="#e0e0e0" stroke-width="1.2"/><line x1="448" y1="786.9" x2="448" y2="794" stroke="#e0e0e0" stroke-width="1.2"/><line x1="517.6" y1="786.9" x2="517.6" y2="794" stroke="#e0e0e0" stroke-width="1.2"/><line x1="587.6" y1="786.9" x2="587.6" y2="794" stroke="#e0e0e0" stroke-width="1.2"/><line x1="657.3" y1="786.9" x2="657.3" y2="794" stroke="#e0e0e0" stroke-width="1.2"/><rect x="220.3" y="623" width="11.8" height="163.89999999999998" fill="#ff9800"/><rect x="237.9" y="607.7" width="11.8" height="179.19999999999993" fill="#ff9800"/><rect x="255.1" y="500.1" width="11.8" height="286.79999999999995" fill="#ff9800"/><rect x="272.7" y="487.6" width="11.8" height="299.29999999999995" fill="#ff9800"/><rect x="289.9" y="530.6" width="11.8" height="256.29999999999995" fill="#ff9800"/><rect x="307.5" y="639.8" width="11.8" height="147.10000000000002" fill="#ff9800"/><rect x="325.1" y="669.9" width="11.8" height="117.0" fill="#ff9800"/></svg><div style="position:absolute;left:104.00px;top:475.65px;white-space:nowrap;font-size:15px;line-height:15px;color:#333;font-weight:400;transform:scaleX(0.9972);transform-origin:0 0;"><span id="tb401bfd424">0.6</span></div><div style="position:absolute;left:104.00px;top:535.85px;white-space:nowrap;font-size:15px;line-height:15px;color:#333;font-weight:400;transform:scaleX(0.9972);transform-origin:0 0;"><span id="t2812b3ec14">0.5</span></div><div style="position:absolute;left:104.00px;top:595.75px;white-space:nowrap;font-size:15px;line-height:15px;color:#333;font-weight:400;transform:scaleX(0.9972);transform-origin:0 0;"><span id="ta0a56d91ad">0.4</span></div><div style="position:absolute;left:104.00px;top:655.65px;white-space:nowrap;font-size:15px;line-height:15px;color:#333;font-weight:400;transform:scaleX(0.9972);transform-origin:0 0;"><span id="tebb324f977">0.2</span></div><div style="position:absolute;left:104.00px;top:715.45px;white-space:nowrap;font-size:15px;line-height:15px;color:#333;font-weight:400;transform:scaleX(0.9972);transform-origin:0 0;"><span id="tb8fd5b205b">0.1</span></div><div style="position:absolute;left:104.00px;top:775.75px;white-space:nowrap;font-size:15px;line-height:15px;color:#333;font-weight:400;transform:scaleX(0.9972);transform-origin:0 0;"><span id="t162a223c6f">0.0</span></div><div style="position:absolute;left:-431.00px;width:1200px;text-align:center;top:804.85px;white-space:nowrap;font-size:15px;line-height:15px;color:#333;font-weight:400;transform:scaleX(0.9641);transform-origin:50% 0;"><span id="t78e3e9d4bb">14:00</span></div><div style="position:absolute;left:-361.30px;width:1200px;text-align:center;top:804.85px;white-space:nowrap;font-size:15px;line-height:15px;color:#333;font-weight:400;transform:scaleX(0.9641);transform-origin:50% 0;"><span id="t782b93151b">18:00</span></div><div style="position:absolute;left:-291.70px;width:1200px;text-align:center;top:804.85px;white-space:nowrap;font-size:15px;line-height:15px;color:#333;font-weight:400;transform:scaleX(0.9641);transform-origin:50% 0;"><span id="t054de1e750">22:00</span></div><div style="position:absolute;left:-222.00px;width:1200px;text-align:center;top:804.85px;white-space:nowrap;font-size:15px;line-height:15px;color:#333;font-weight:400;transform:scaleX(0.9641);transform-origin:50% 0;"><span id="t8192316ce4">02:00</span></div><div style="position:absolute;left:-152.00px;width:1200px;text-align:center;top:804.85px;white-space:nowrap;font-size:15px;line-height:15px;color:#333;font-weight:400;transform:scaleX(0.9641);transform-origin:50% 0;"><span id="tc3bd8872d3">06:00</span></div><div style="position:absolute;left:-82.40px;width:1200px;text-align:center;top:804.85px;white-space:nowrap;font-size:15px;line-height:15px;color:#333;font-weight:400;transform:scaleX(0.9641);transform-origin:50% 0;"><span id="t76bd4c6c0c">10:00</span></div><div style="position:absolute;left:-12.40px;width:1200px;text-align:center;top:804.85px;white-space:nowrap;font-size:15px;line-height:15px;color:#333;font-weight:400;transform:scaleX(0.9641);transform-origin:50% 0;"><span id="t2428d5431f">14:00</span></div><div style="position:absolute;left:57.30px;width:1200px;text-align:center;top:804.85px;white-space:nowrap;font-size:15px;line-height:15px;color:#333;font-weight:400;transform:scaleX(0.9641);transform-origin:50% 0;"><span id="t6ef9261f84">18:00</span></div><div style="position:absolute;left:1330.70px;top:836.70px;white-space:nowrap;font-size:20px;line-height:20px;color:#6f6f6f;font-weight:400;-webkit-text-stroke:0.56px #6f6f6f;transform:scaleX(1.0021);transform-origin:0 0;"><span id="t4c4c698596">Le Crotoy Consommation horaire J-2</span></div><svg style="position:absolute;left:0;top:0" width="2536" height="1227"><line x1="1371.3" y1="902" x2="1907.2" y2="902" stroke="#e0e0e0" stroke-width="1" stroke-dasharray="4 3.3"/><line x1="1371.3" y1="957.4" x2="1907.2" y2="957.4" stroke="#e0e0e0" stroke-width="1" stroke-dasharray="4 3.3"/><line x1="1371.3" y1="1012.8" x2="1907.2" y2="1012.8" stroke="#e0e0e0" stroke-width="1" stroke-dasharray="4 3.3"/><line x1="1371.3" y1="1067.8" x2="1907.2" y2="1067.8" stroke="#e0e0e0" stroke-width="1" stroke-dasharray="4 3.3"/><line x1="1371.3" y1="1123.2" x2="1907.2" y2="1123.2" stroke="#e0e0e0" stroke-width="1" stroke-dasharray="4 3.3"/><line x1="1371.3" y1="1179" x2="1907.2" y2="1179" stroke="#e3e3e3" stroke-width="1.2"/><line x1="1398.9" y1="1179" x2="1398.9" y2="1186" stroke="#e0e0e0" stroke-width="1.2"/><line x1="1468.5" y1="1179" x2="1468.5" y2="1186" stroke="#e0e0e0" stroke-width="1.2"/><line x1="1538.2" y1="1179" x2="1538.2" y2="1186" stroke="#e0e0e0" stroke-width="1.2"/><line x1="1608.2" y1="1179" x2="1608.2" y2="1186" stroke="#e0e0e0" stroke-width="1.2"/><line x1="1677.9" y1="1179" x2="1677.9" y2="1186" stroke="#e0e0e0" stroke-width="1.2"/><line x1="1747.9" y1="1179" x2="1747.9" y2="1186" stroke="#e0e0e0" stroke-width="1.2"/><line x1="1817.6" y1="1179" x2="1817.6" y2="1186" stroke="#e0e0e0" stroke-width="1.2"/><line x1="1887.3" y1="1179" x2="1887.3" y2="1186" stroke="#e0e0e0" stroke-width="1.2"/></svg><div style="position:absolute;left:1334.20px;top:890.85px;white-space:nowrap;font-size:15px;line-height:15px;color:#333;font-weight:400;transform:scaleX(0.9972);transform-origin:0 0;"><span id="tb90e7c59b5">2.0</span></div><div style="position:absolute;left:1334.20px;top:946.25px;white-space:nowrap;font-size:15px;line-height:15px;color:#333;font-weight:400;transform:scaleX(0.9972);transform-origin:0 0;"><span id="t6817ded8fb">1.6</span></div><div style="position:absolute;left:1334.20px;top:1001.65px;white-space:nowrap;font-size:15px;line-height:15px;color:#333;font-weight:400;transform:scaleX(0.9972);transform-origin:0 0;"><span id="t755d256962">1.2</span></div><div style="position:absolute;left:1334.20px;top:1056.65px;white-space:nowrap;font-size:15px;line-height:15px;color:#333;font-weight:400;transform:scaleX(0.9972);transform-origin:0 0;"><span id="td7a9fcb586">0.8</span></div><div style="position:absolute;left:1334.20px;top:1112.05px;white-space:nowrap;font-size:15px;line-height:15px;color:#333;font-weight:400;transform:scaleX(0.9972);transform-origin:0 0;"><span id="td9618ceb7b">0.4</span></div><div style="position:absolute;left:1334.20px;top:1167.85px;white-space:nowrap;font-size:15px;line-height:15px;color:#333;font-weight:400;transform:scaleX(0.9972);transform-origin:0 0;"><span id="t490152f178">0.0</span></div><div style="position:absolute;left:798.90px;width:1200px;text-align:center;top:1197.45px;white-space:nowrap;font-size:15px;line-height:15px;color:#333;font-weight:400;transform:scaleX(0.9642);transform-origin:50% 0;"><span id="td92ddeab88">14:00</span></div><div style="position:absolute;left:868.50px;width:1200px;text-align:center;top:1197.45px;white-space:nowrap;font-size:15px;line-height:15px;color:#333;font-weight:400;transform:scaleX(0.9642);transform-origin:50% 0;"><span id="tff7aa6dbc8">18:00</span></div><div style="position:absolute;left:938.20px;width:1200px;text-align:center;top:1197.45px;white-space:nowrap;font-size:15px;line-height:15px;color:#333;font-weight:400;transform:scaleX(0.9642);transform-origin:50% 0;"><span id="td556be0151">22:00</span></div><div style="position:absolute;left:1008.20px;width:1200px;text-align:center;top:1197.45px;white-space:nowrap;font-size:15px;line-height:15px;color:#333;font-weight:400;transform:scaleX(0.9641);transform-origin:50% 0;"><span id="tf166eea06d">02:00</span></div><div style="position:absolute;left:1077.90px;width:1200px;text-align:center;top:1197.45px;white-space:nowrap;font-size:15px;line-height:15px;color:#333;font-weight:400;transform:scaleX(0.9641);transform-origin:50% 0;"><span id="tc5d8f5a4f5">06:00</span></div><div style="position:absolute;left:1147.90px;width:1200px;text-align:center;top:1197.45px;white-space:nowrap;font-size:15px;line-height:15px;color:#333;font-weight:400;transform:scaleX(0.9641);transform-origin:50% 0;"><span id="t51a5c65eed">10:00</span></div><div style="position:absolute;left:1217.60px;width:1200px;text-align:center;top:1197.45px;white-space:nowrap;font-size:15px;line-height:15px;color:#333;font-weight:400;transform:scaleX(0.9641);transform-origin:50% 0;"><span id="t02e79ca422">14:00</span></div><div style="position:absolute;left:1287.30px;width:1200px;text-align:center;top:1197.45px;white-space:nowrap;font-size:15px;line-height:15px;color:#333;font-weight:400;transform:scaleX(0.9641);transform-origin:50% 0;"><span id="t93514da30c">18:00</span></div><div style="position:absolute;left:1438px;top:1221.5px;width:14px;height:14px;border-radius:50%;background:#ff9800;"></div><div style="position:absolute;left:1456.00px;top:1220.75px;white-space:nowrap;font-size:15px;line-height:15px;color:#333;font-weight:400;"><span id="t032cada682">kWh(HC) (+2d): <b>0 kWh</b></span></div><div style="position:absolute;left:1619px;top:1221.5px;width:14px;height:14px;border-radius:50%;background:#3498db;"></div><div style="position:absolute;left:1637.00px;top:1220.75px;white-space:nowrap;font-size:15px;line-height:15px;color:#333;font-weight:400;"><span id="t39d77e5774">kWh(HP) (+2d): <b>0 kWh</b></span></div><div style="position:absolute;left:715px;top:99px;width:565px;height:458px;background:#fff;border:1px solid #dde3ea;border-radius:4px;overflow:hidden;"><div style="position:absolute;left:-1.00px;top:35.00px;width:565.00px;height:40.80px;background:#eff3f8;"></div><div style="position:absolute;left:124.40px;top:35.00px;width:1.00px;height:40.80px;background:#fbfcfd;"></div><div style="position:absolute;left:124.40px;top:75.80px;width:1.00px;height:349.30px;background:#dde3ea;"></div><div style="position:absolute;left:499.30px;top:35.00px;width:1.00px;height:40.80px;background:#fbfcfd;"></div><div style="position:absolute;left:499.30px;top:75.80px;width:1.00px;height:349.30px;background:#dde3ea;"></div><div style="position:absolute;left:-1.00px;top:119.30px;width:565.00px;height:1.00px;background:#dde3ea;"></div><div style="position:absolute;left:-1.00px;top:163.20px;width:565.00px;height:1.00px;background:#dde3ea;"></div><div style="position:absolute;left:-1.00px;top:206.30px;width:565.00px;height:1.00px;background:#dde3ea;"></div><div style="position:absolute;left:-1.00px;top:250.20px;width:565.00px;height:1.00px;background:#dde3ea;"></div><div style="position:absolute;left:-1.00px;top:294.20px;width:565.00px;height:1.00px;background:#dde3ea;"></div><div style="position:absolute;left:-1.00px;top:338.10px;width:565.00px;height:1.00px;background:#dde3ea;"></div><div style="position:absolute;left:-1.00px;top:381.20px;width:565.00px;height:1.00px;background:#dde3ea;"></div><div style="position:absolute;left:-1.00px;top:425.10px;width:565.00px;height:1.00px;background:#dde3ea;"></div></div><div style="position:absolute;left:716px;top:100px;width:563px;height:456px;overflow:hidden;"><div style="position:absolute;left:-318.60px;width:1200px;text-align:center;top:9.40px;white-space:nowrap;font-size:18px;line-height:18px;color:#363c47;font-weight:400;-webkit-text-stroke:0.50px #363c47;transform:scaleX(0.9810);transform-origin:50% 0;"><span id="tae7a62894b">Consommations journalieres Vve d'Ascq</span></div><div style="position:absolute;left:8.50px;top:46.70px;white-space:nowrap;font-size:18px;line-height:18px;color:#35a0e5;font-weight:400;transform:scaleX(0.9529);transform-origin:0 0;"><span id="tb5153d308b">Date</span></div><svg style="position:absolute;left:45.40px;top:48.30px" width="15.5" height="15.5" viewBox="0 0 24 24"><path fill="#35a0e5" d="M13,20H11V8L5.5,13.5L4.08,12.08L12,4.16L19.92,12.08L18.5,13.5L13,8V20Z"/></svg><div style="position:absolute;left:132.90px;top:46.70px;white-space:nowrap;font-size:18px;line-height:18px;color:#35a0e5;font-weight:400;transform:scaleX(0.9973);transform-origin:0 0;"><span id="tce8f631743">Consommation</span></div><div style="position:absolute;left:508.10px;top:46.70px;white-space:nowrap;font-size:18px;line-height:18px;color:#35a0e5;font-weight:400;transform:scaleX(0.9755);transform-origin:0 0;"><span id="tae5ad9cc89">Prix</span></div><div style="position:absolute;left:8.00px;top:88.95px;white-space:nowrap;font-size:18px;line-height:18px;color:#363c47;font-weight:400;transform:scaleX(0.9699);transform-origin:0 0;"><span id="tdf2997883b">02/04/2021…</span></div><div style="position:absolute;left:133.00px;top:84.05px;width:266.90px;height:27.00px;background:#ececec;border-radius:5px;"></div><div style="position:absolute;left:133.00px;top:84.05px;width:122.80px;height:27.00px;background:linear-gradient(to right,#56a84a,#8e7848 50%,#e12a42);border-radius:5px;"></div><div style="position:absolute;left:419.10px;top:88.95px;white-space:nowrap;font-size:18px;line-height:18px;color:#e0243c;font-weight:400;transform:scaleX(0.9713);transform-origin:0 0;"><span id="tf73ee1222f">4.84 <span style="font-size:16px">kW</span></span></div><div style="position:absolute;left:508.10px;top:88.95px;white-space:nowrap;font-size:18px;line-height:18px;color:#363c47;font-weight:400;"><span id="te11f3b7ca0">0.708 €</span></div><div style="position:absolute;left:8.00px;top:132.65px;white-space:nowrap;font-size:18px;line-height:18px;color:#363c47;font-weight:400;transform:scaleX(0.9699);transform-origin:0 0;"><span id="t25e63933ab">03/04/2021…</span></div><div style="position:absolute;left:133.00px;top:127.75px;width:266.90px;height:27.00px;background:#ececec;border-radius:5px;"></div><div style="position:absolute;left:133.00px;top:127.75px;width:127.60px;height:27.00px;background:linear-gradient(to right,#56a84a,#8e7848 50%,#e12a42);border-radius:5px;"></div><div style="position:absolute;left:419.10px;top:132.65px;white-space:nowrap;font-size:18px;line-height:18px;color:#e0243c;font-weight:400;transform:scaleX(0.9713);transform-origin:0 0;"><span id="t03f4581902">5.01 <span style="font-size:16px">kW</span></span></div><div style="position:absolute;left:508.10px;top:132.65px;white-space:nowrap;font-size:18px;line-height:18px;color:#363c47;font-weight:400;"><span id="ta11674bcdd">0.733 €</span></div><div style="position:absolute;left:8.00px;top:176.15px;white-space:nowrap;font-size:18px;line-height:18px;color:#363c47;font-weight:400;transform:scaleX(0.9699);transform-origin:0 0;"><span id="t6869f3b44c">04/04/2021…</span></div><div style="position:absolute;left:133.00px;top:171.25px;width:266.90px;height:27.00px;background:#ececec;border-radius:5px;"></div><div style="position:absolute;left:133.00px;top:171.25px;width:100.90px;height:27.00px;background:linear-gradient(to right,#56a84a,#8e7848 50%,#e12a42);border-radius:5px;"></div><div style="position:absolute;left:419.10px;top:176.15px;white-space:nowrap;font-size:18px;line-height:18px;color:#e0243c;font-weight:400;transform:scaleX(0.9713);transform-origin:0 0;"><span id="tf38a2e02ed">3.99 <span style="font-size:16px">kW</span></span></div><div style="position:absolute;left:508.10px;top:176.15px;white-space:nowrap;font-size:18px;line-height:18px;color:#363c47;font-weight:400;"><span id="t79bcd0ba67">0.584 €</span></div><div style="position:absolute;left:8.00px;top:219.65px;white-space:nowrap;font-size:18px;line-height:18px;color:#363c47;font-weight:400;transform:scaleX(0.9699);transform-origin:0 0;"><span id="t7ed5f03c02">05/04/2021…</span></div><div style="position:absolute;left:133.00px;top:214.75px;width:266.90px;height:27.00px;background:#ececec;border-radius:5px;"></div><div style="position:absolute;left:133.00px;top:214.75px;width:160.00px;height:27.00px;background:linear-gradient(to right,#56a84a,#8e7848 50%,#e12a42);border-radius:5px;"></div><div style="position:absolute;left:419.10px;top:219.65px;white-space:nowrap;font-size:18px;line-height:18px;color:#e0243c;font-weight:400;transform:scaleX(0.9713);transform-origin:0 0;"><span id="t08fbdd22d2">6.30 <span style="font-size:16px">kW</span></span></div><div style="position:absolute;left:508.10px;top:219.65px;white-space:nowrap;font-size:18px;line-height:18px;color:#363c47;font-weight:400;"><span id="t6d483f36e0">0.921 €</span></div><div style="position:absolute;left:8.00px;top:263.60px;white-space:nowrap;font-size:18px;line-height:18px;color:#363c47;font-weight:400;transform:scaleX(0.9699);transform-origin:0 0;"><span id="teffe146a7a">06/04/2021…</span></div><div style="position:absolute;left:133.00px;top:258.70px;width:266.90px;height:27.00px;background:#ececec;border-radius:5px;"></div><div style="position:absolute;left:133.00px;top:258.70px;width:235.00px;height:27.00px;background:linear-gradient(to right,#56a84a,#8e7848 50%,#e12a42);border-radius:5px;"></div><div style="position:absolute;left:419.10px;top:263.60px;white-space:nowrap;font-size:18px;line-height:18px;color:#e0243c;font-weight:400;transform:scaleX(0.9713);transform-origin:0 0;"><span id="t602931e1f2">9.21 <span style="font-size:16px">kW</span></span></div><div style="position:absolute;left:508.10px;top:263.60px;white-space:nowrap;font-size:18px;line-height:18px;color:#363c47;font-weight:400;"><span id="t96708554cc">1.35 €</span></div><div style="position:absolute;left:8.00px;top:307.55px;white-space:nowrap;font-size:18px;line-height:18px;color:#363c47;font-weight:400;transform:scaleX(0.9699);transform-origin:0 0;"><span id="t718376d6b9">07/04/2021…</span></div><div style="position:absolute;left:133.00px;top:302.65px;width:266.90px;height:27.00px;background:#ececec;border-radius:5px;"></div><div style="position:absolute;left:133.00px;top:302.65px;width:259.80px;height:27.00px;background:linear-gradient(to right,#56a84a,#8e7848 50%,#e12a42);border-radius:5px;"></div><div style="position:absolute;left:419.10px;top:307.55px;white-space:nowrap;font-size:18px;line-height:18px;color:#e0243c;font-weight:400;transform:scaleX(0.9713);transform-origin:0 0;"><span id="tf69e222153">10.2 <span style="font-size:16px">kW</span></span></div><div style="position:absolute;left:508.10px;top:307.55px;white-space:nowrap;font-size:18px;line-height:18px;color:#363c47;font-weight:400;"><span id="t4b24d02309">1.49 €</span></div><div style="position:absolute;left:8.00px;top:351.05px;white-space:nowrap;font-size:18px;line-height:18px;color:#363c47;font-weight:400;transform:scaleX(0.9699);transform-origin:0 0;"><span id="t49ee2b3331">08/04/2021…</span></div><div style="position:absolute;left:133.00px;top:346.15px;width:266.90px;height:27.00px;background:#ececec;border-radius:5px;"></div><div style="position:absolute;left:133.00px;top:346.15px;width:270.90px;height:27.00px;background:linear-gradient(to right,#56a84a,#8e7848 50%,#e12a42);border-radius:5px;"></div><div style="position:absolute;left:419.10px;top:351.05px;white-space:nowrap;font-size:18px;line-height:18px;color:#e0243c;font-weight:400;transform:scaleX(0.9713);transform-origin:0 0;"><span id="t339cd67f59">10.6 <span style="font-size:16px">kW</span></span></div><div style="position:absolute;left:508.10px;top:351.05px;white-space:nowrap;font-size:18px;line-height:18px;color:#363c47;font-weight:400;"><span id="t8e07617e71">1.55 €</span></div><div style="position:absolute;left:8.00px;top:394.55px;white-space:nowrap;font-size:18px;line-height:18px;color:#363c47;font-weight:400;transform:scaleX(0.9699);transform-origin:0 0;"><span id="t6a8e5d0ac5">09/04/2021…</span></div><div style="position:absolute;left:133.00px;top:389.65px;width:282.90px;height:27.00px;background:#ececec;border-radius:5px;"></div></div><div style="position:absolute;left:715px;top:714.7px;width:565px;height:600px;background:#fff;border:1px solid #dde3ea;border-radius:4px;overflow:hidden;"><div style="position:absolute;left:-1.00px;top:34.80px;width:565.00px;height:39.80px;background:#eff3f8;"></div><div style="position:absolute;left:124.00px;top:34.80px;width:1.00px;height:39.80px;background:#fbfcfd;"></div><div style="position:absolute;left:124.00px;top:74.60px;width:1.00px;height:438.40px;background:#dde3ea;"></div><div style="position:absolute;left:-1.00px;top:118.80px;width:565.00px;height:1.00px;background:#dde3ea;"></div><div style="position:absolute;left:-1.00px;top:162.60px;width:565.00px;height:1.00px;background:#dde3ea;"></div><div style="position:absolute;left:-1.00px;top:206.40px;width:565.00px;height:1.00px;background:#dde3ea;"></div><div style="position:absolute;left:-1.00px;top:250.20px;width:565.00px;height:1.00px;background:#dde3ea;"></div><div style="position:absolute;left:-1.00px;top:294.00px;width:565.00px;height:1.00px;background:#dde3ea;"></div><div style="position:absolute;left:-1.00px;top:337.80px;width:565.00px;height:1.00px;background:#dde3ea;"></div><div style="position:absolute;left:-1.00px;top:381.60px;width:565.00px;height:1.00px;background:#dde3ea;"></div><div style="position:absolute;left:-1.00px;top:425.40px;width:565.00px;height:1.00px;background:#dde3ea;"></div><div style="position:absolute;left:-1.00px;top:469.20px;width:565.00px;height:1.00px;background:#dde3ea;"></div><div style="position:absolute;left:-1.00px;top:513.00px;width:565.00px;height:1.00px;background:#dde3ea;"></div></div><div style="position:absolute;left:716px;top:715.7px;width:563px;height:598px;overflow:hidden;"><div style="position:absolute;left:-319.20px;width:1200px;text-align:center;top:8.80px;white-space:nowrap;font-size:18px;line-height:18px;color:#363c47;font-weight:400;-webkit-text-stroke:0.50px #363c47;transform:scaleX(0.9781);transform-origin:50% 0;"><span id="tb7bd3a3333">Consommations horaires Vve d'Ascq</span></div><div style="position:absolute;left:8.00px;top:46.20px;white-space:nowrap;font-size:18px;line-height:18px;color:#35a0e5;font-weight:400;transform:scaleX(1.0350);transform-origin:0 0;"><span id="t4c72abc27e">Jour</span></div><div style="position:absolute;left:132.50px;top:46.30px;white-space:nowrap;font-size:18px;line-height:18px;color:#35a0e5;font-weight:400;transform:scaleX(0.9974);transform-origin:0 0;"><span id="t7ac9d1b1fb">Consommation</span></div><div style="position:absolute;left:8.00px;top:88.10px;white-space:nowrap;font-size:18px;line-height:18px;color:#363c47;font-weight:400;transform:scaleX(0.9699);transform-origin:0 0;"><span id="t0a41dc99a1">08/04/2021…</span></div><div style="position:absolute;left:133.00px;top:83.20px;width:600.00px;height:27.00px;background:#ececec;border-radius:5px;"></div><div style="position:absolute;left:133.00px;top:83.20px;width:65.00px;height:27.00px;background:linear-gradient(to right,#56a84a,#8e7848 50%,#e12a42);border-radius:5px;"></div><div style="position:absolute;left:8.00px;top:132.10px;white-space:nowrap;font-size:18px;line-height:18px;color:#363c47;font-weight:400;transform:scaleX(0.9699);transform-origin:0 0;"><span id="t3f006e1b58">08/04/2021…</span></div><div style="position:absolute;left:133.00px;top:127.20px;width:600.00px;height:27.00px;background:#ececec;border-radius:5px;"></div><div style="position:absolute;left:133.00px;top:127.20px;width:47.60px;height:27.00px;background:linear-gradient(to right,#56a84a,#8e7848 50%,#e12a42);border-radius:5px;"></div><div style="position:absolute;left:8.00px;top:175.90px;white-space:nowrap;font-size:18px;line-height:18px;color:#363c47;font-weight:400;transform:scaleX(0.9699);transform-origin:0 0;"><span id="t3ac378f27a">08/04/2021…</span></div><div style="position:absolute;left:133.00px;top:171.00px;width:600.00px;height:27.00px;background:#ececec;border-radius:5px;"></div><div style="position:absolute;left:133.00px;top:171.00px;width:27.50px;height:27.00px;background:linear-gradient(to right,#56a84a,#8e7848 50%,#e12a42);border-radius:5px;"></div><div style="position:absolute;left:8.00px;top:219.70px;white-space:nowrap;font-size:18px;line-height:18px;color:#363c47;font-weight:400;transform:scaleX(0.9699);transform-origin:0 0;"><span id="t7c9f905581">08/04/2021…</span></div><div style="position:absolute;left:133.00px;top:214.80px;width:600.00px;height:27.00px;background:#ececec;border-radius:5px;"></div><div style="position:absolute;left:133.00px;top:214.80px;width:49.80px;height:27.00px;background:linear-gradient(to right,#56a84a,#8e7848 50%,#e12a42);border-radius:5px;"></div><div style="position:absolute;left:8.00px;top:263.50px;white-space:nowrap;font-size:18px;line-height:18px;color:#363c47;font-weight:400;transform:scaleX(0.9699);transform-origin:0 0;"><span id="t55ca98f371">08/04/2021…</span></div><div style="position:absolute;left:133.00px;top:258.60px;width:600.00px;height:27.00px;background:#ececec;border-radius:5px;"></div><div style="position:absolute;left:133.00px;top:258.60px;width:51.00px;height:27.00px;background:linear-gradient(to right,#56a84a,#8e7848 50%,#e12a42);border-radius:5px;"></div><div style="position:absolute;left:8.00px;top:307.30px;white-space:nowrap;font-size:18px;line-height:18px;color:#363c47;font-weight:400;transform:scaleX(0.9699);transform-origin:0 0;"><span id="tb44c9dd7fc">08/04/2021…</span></div><div style="position:absolute;left:133.00px;top:302.40px;width:600.00px;height:27.00px;background:#ececec;border-radius:5px;"></div><div style="position:absolute;left:133.00px;top:302.40px;width:73.40px;height:27.00px;background:linear-gradient(to right,#56a84a,#8e7848 50%,#e12a42);border-radius:5px;"></div><div style="position:absolute;left:8.00px;top:351.10px;white-space:nowrap;font-size:18px;line-height:18px;color:#363c47;font-weight:400;transform:scaleX(0.9699);transform-origin:0 0;"><span id="t363ecedd4f">08/04/2021…</span></div><div style="position:absolute;left:133.00px;top:346.20px;width:600.00px;height:27.00px;background:#ececec;border-radius:5px;"></div><div style="position:absolute;left:133.00px;top:346.20px;width:84.60px;height:27.00px;background:linear-gradient(to right,#56a84a,#8e7848 50%,#e12a42);border-radius:5px;"></div><div style="position:absolute;left:8.00px;top:394.90px;white-space:nowrap;font-size:18px;line-height:18px;color:#363c47;font-weight:400;transform:scaleX(0.9699);transform-origin:0 0;"><span id="td63b560e74">08/04/2021…</span></div><div style="position:absolute;left:133.00px;top:390.00px;width:600.00px;height:27.00px;background:#ececec;border-radius:5px;"></div><div style="position:absolute;left:133.00px;top:390.00px;width:105.80px;height:27.00px;background:linear-gradient(to right,#56a84a,#8e7848 50%,#e12a42);border-radius:5px;"></div><div style="position:absolute;left:8.00px;top:438.70px;white-space:nowrap;font-size:18px;line-height:18px;color:#363c47;font-weight:400;transform:scaleX(0.9699);transform-origin:0 0;"><span id="tc7567b98cf">08/04/2021…</span></div><div style="position:absolute;left:133.00px;top:433.80px;width:600.00px;height:27.00px;background:#ececec;border-radius:5px;"></div><div style="position:absolute;left:133.00px;top:433.80px;width:451.00px;height:27.00px;background:linear-gradient(to right,#56a84a,#8e7848 50%,#e12a42);border-radius:5px;"></div><div style="position:absolute;left:8.00px;top:482.50px;white-space:nowrap;font-size:18px;line-height:18px;color:#363c47;font-weight:400;transform:scaleX(0.9699);transform-origin:0 0;"><span id="t43b7ee227d">08/04/2021…</span></div><div style="position:absolute;left:133.00px;top:477.60px;width:600.00px;height:27.00px;background:#ececec;border-radius:5px;"></div><div style="position:absolute;left:133.00px;top:477.60px;width:296.80px;height:27.00px;background:linear-gradient(to right,#56a84a,#8e7848 50%,#e12a42);border-radius:5px;"></div></div><div style="position:absolute;left:1944.50px;top:99.00px;width:564.00px;height:359.00px;background:#fff;border:1px solid #dde3ea;border-radius:4px;"></div><div style="position:absolute;left:1626.70px;width:1200px;text-align:center;top:108.70px;white-space:nowrap;font-size:18px;line-height:18px;color:#373d3f;font-weight:400;-webkit-text-stroke:0.50px #373d3f;transform:scaleX(0.9460);transform-origin:50% 0;"><span id="t06175a35cb">Gazpar</span></div><svg style="position:absolute;left:0;top:0" width="2536" height="1227"><defs><linearGradient id="tg" gradientUnits="userSpaceOnUse" x1="0" y1="200" x2="0" y2="389">
<stop offset="0" stop-color="#b3142b" stop-opacity="0.58"/><stop offset="1" stop-color="#b3142b" stop-opacity="0.0"/></linearGradient></defs><line x1="1992.5" y1="156.2" x2="2452" y2="156.2" stroke="#e6e6e6" stroke-width="1"/><line x1="1992.5" y1="195.0" x2="2452" y2="195.0" stroke="#e6e6e6" stroke-width="1"/><line x1="1992.5" y1="233.8" x2="2452" y2="233.8" stroke="#e6e6e6" stroke-width="1"/><line x1="1992.5" y1="272.6" x2="2452" y2="272.6" stroke="#e6e6e6" stroke-width="1"/><line x1="1992.5" y1="311.4" x2="2452" y2="311.4" stroke="#e6e6e6" stroke-width="1"/><line x1="1992.5" y1="350.2" x2="2452" y2="350.2" stroke="#e6e6e6" stroke-width="1"/><line x1="1992.5" y1="389.0" x2="2452" y2="389.0" stroke="#e6e6e6" stroke-width="1"/><line x1="2071.6" y1="156.2" x2="2071.6" y2="389" stroke="#e6e6e6" stroke-width="1"/><line x1="2194.3" y1="156.2" x2="2194.3" y2="389" stroke="#e6e6e6" stroke-width="1"/><line x1="2315.5" y1="156.2" x2="2315.5" y2="389" stroke="#e6e6e6" stroke-width="1"/><line x1="2421.7" y1="156.2" x2="2421.7" y2="389" stroke="#e6e6e6" stroke-width="1"/><line x1="2451" y1="156.2" x2="2457" y2="156.2" stroke="#e0e0e0" stroke-width="1"/><line x1="2451" y1="214.4" x2="2457" y2="214.4" stroke="#e0e0e0" stroke-width="1"/><line x1="2451" y1="272.6" x2="2457" y2="272.6" stroke="#e0e0e0" stroke-width="1"/><line x1="2451" y1="330.8" x2="2457" y2="330.8" stroke="#e0e0e0" stroke-width="1"/><line x1="2451" y1="389" x2="2457" y2="389" stroke="#e0e0e0" stroke-width="1"/><rect x="2224.7" y="287" width="10.4" height="102" fill="#7eb26d"/><rect x="2240.0" y="273.7" width="10.4" height="115.30000000000001" fill="#7eb26d"/><rect x="2255.4" y="257.9" width="10.4" height="131.10000000000002" fill="#7eb26d"/><rect x="2270.4" y="286.5" width="10.4" height="102.5" fill="#7eb26d"/><rect x="2285.8" y="306.9" width="10.4" height="82.10000000000002" fill="#7eb26d"/><rect x="2301.1" y="327.3" width="10.4" height="61.69999999999999" fill="#7eb26d"/><rect x="2346.9" y="361.4" width="10.4" height="27.600000000000023" fill="#7eb26d"/><rect x="2362.2" y="336.8" width="10.4" height="52.19999999999999" fill="#7eb26d"/><rect x="2377.2" y="367.6" width="10.4" height="21.399999999999977" fill="#7eb26d"/><rect x="2392.6" y="363.4" width="10.4" height="25.600000000000023" fill="#7eb26d"/><rect x="2408.0" y="177.6" width="10.4" height="211.4" fill="#7eb26d"/><rect x="2423.3" y="161.9" width="10.4" height="227.1" fill="#7eb26d"/><rect x="2438.4" y="168.1" width="10.4" height="220.9" fill="#7eb26d"/><path d="M2011.44,389 L2011.44,290.28 L2026.82,299.01 L2041.78,297.35 L2057.16,290.28 L2072.12,320.21 L2087.50,311.06 L2102.88,315.22 L2117.84,321.87 L2133.22,308.99 L2148.60,287.37 L2163.56,311.48 L2178.94,287.37 L2194.31,263.68 L2209.69,269.09 L2224.66,269.09 L2240.03,293.61 L2255.41,249.97 L2270.37,232.51 L2285.75,228.77 L2301.13,201.34 L2316.09,225.86 L2331.47,292.78 L2346.85,294.44 L2362.23,307.32 L2377.19,328.10 L2392.57,338.50 L2407.95,324.36 L2423.33,287.79 L2438.29,263.68 L2438.29,389 Z" fill="url(#tg)"/><polyline points="2011.44,290.28 2026.82,299.01 2041.78,297.35 2057.16,290.28 2072.12,320.21 2087.50,311.06 2102.88,315.22 2117.84,321.87 2133.22,308.99 2148.60,287.37 2163.56,311.48 2178.94,287.37 2194.31,263.68 2209.69,269.09 2224.66,269.09 2240.03,293.61 2255.41,249.97 2270.37,232.51 2285.75,228.77 2301.13,201.34 2316.09,225.86 2331.47,292.78 2346.85,294.44 2362.23,307.32 2377.19,328.10 2392.57,338.50 2407.95,324.36 2423.33,287.79 2438.29,263.68" fill="none" stroke="#b81c2e" stroke-width="1.6" stroke-linejoin="round"/><rect x="1967.8" y="435.7" width="17.5" height="5.5" rx="1" fill="#7eb26d"/><rect x="2386.3" y="435.7" width="17.7" height="5.5" rx="1" fill="#a50f1e"/></svg><div style="position:absolute;left:786.00px;width:1200px;text-align:right;top:148.05px;white-space:nowrap;font-size:15px;line-height:15px;color:#373d3f;font-weight:400;transform:scaleX(1.0200);transform-origin:100% 0;"><span id="t98ea569971">7 m³</span></div><div style="position:absolute;left:786.00px;width:1200px;text-align:right;top:186.85px;white-space:nowrap;font-size:15px;line-height:15px;color:#373d3f;font-weight:400;transform:scaleX(1.0200);transform-origin:100% 0;"><span id="te0657a503e">6 m³</span></div><div style="position:absolute;left:786.00px;width:1200px;text-align:right;top:225.65px;white-space:nowrap;font-size:15px;line-height:15px;color:#373d3f;font-weight:400;transform:scaleX(1.0200);transform-origin:100% 0;"><span id="t5adb90fa92">5 m³</span></div><div style="position:absolute;left:786.00px;width:1200px;text-align:right;top:264.45px;white-space:nowrap;font-size:15px;line-height:15px;color:#373d3f;font-weight:400;transform:scaleX(1.0200);transform-origin:100% 0;"><span id="tc992ddc1b1">4 m³</span></div><div style="position:absolute;left:786.00px;width:1200px;text-align:right;top:303.25px;white-space:nowrap;font-size:15px;line-height:15px;color:#373d3f;font-weight:400;transform:scaleX(1.0200);transform-origin:100% 0;"><span id="te7a96edafe">3 m³</span></div><div style="position:absolute;left:786.00px;width:1200px;text-align:right;top:342.05px;white-space:nowrap;font-size:15px;line-height:15px;color:#373d3f;font-weight:400;transform:scaleX(1.0200);transform-origin:100% 0;"><span id="tf3bd270f90">2 m³</span></div><div style="position:absolute;left:786.00px;width:1200px;text-align:right;top:380.85px;white-space:nowrap;font-size:15px;line-height:15px;color:#373d3f;font-weight:400;transform:scaleX(1.0200);transform-origin:100% 0;"><span id="teed4f8499f">1 m³</span></div><div style="position:absolute;left:2462.80px;top:148.05px;white-space:nowrap;font-size:15px;line-height:15px;color:#373d3f;font-weight:400;transform:scaleX(0.9685);transform-origin:0 0;"><span id="t85265c41d8">20 °C</span></div><div style="position:absolute;left:2462.80px;top:206.25px;white-space:nowrap;font-size:15px;line-height:15px;color:#373d3f;font-weight:400;transform:scaleX(0.9685);transform-origin:0 0;"><span id="t39aac76919">15 °C</span></div><div style="position:absolute;left:2462.80px;top:264.45px;white-space:nowrap;font-size:15px;line-height:15px;color:#373d3f;font-weight:400;transform:scaleX(0.9685);transform-origin:0 0;"><span id="t93437c75d2">10 °C</span></div><div style="position:absolute;left:2462.80px;top:322.65px;white-space:nowrap;font-size:15px;line-height:15px;color:#373d3f;font-weight:400;transform:scaleX(0.9610);transform-origin:0 0;"><span id="tdacf55680e">5 °C</span></div><div style="position:absolute;left:2462.80px;top:380.85px;white-space:nowrap;font-size:15px;line-height:15px;color:#373d3f;font-weight:400;transform:scaleX(0.9610);transform-origin:0 0;"><span id="tdcce0b2b17">0 °C</span></div><div style="position:absolute;left:1471.60px;width:1200px;text-align:center;top:399.05px;white-space:nowrap;font-size:15px;line-height:15px;color:#373d3f;font-weight:400;transform:scaleX(1.0707);transform-origin:50% 0;"><span id="te94e3feb9b">03/16</span></div><div style="position:absolute;left:1594.30px;width:1200px;text-align:center;top:399.05px;white-space:nowrap;font-size:15px;line-height:15px;color:#373d3f;font-weight:400;transform:scaleX(1.0707);transform-origin:50% 0;"><span id="t285a78c0dc">03/24</span></div><div style="position:absolute;left:1715.50px;width:1200px;text-align:center;top:399.05px;white-space:nowrap;font-size:15px;line-height:15px;color:#373d3f;font-weight:400;transform:scaleX(1.0707);transform-origin:50% 0;"><span id="t5cc7c0b9b4">04/01</span></div><div style="position:absolute;left:1821.70px;width:1200px;text-align:center;top:399.05px;white-space:nowrap;font-size:15px;line-height:15px;color:#373d3f;font-weight:400;transform:scaleX(1.0707);transform-origin:50% 0;"><span id="t0b1c4e690b">04/08</span></div><div style="position:absolute;left:1994.80px;top:429.02px;white-space:nowrap;font-size:15.5px;line-height:15.5px;color:#373d3f;font-weight:400;transform:scaleX(0.9848);transform-origin:0 0;"><span id="tf892a5ba0c">Conso (m3)</span></div><div style="position:absolute;left:2413.80px;top:429.02px;white-space:nowrap;font-size:15.5px;line-height:15.5px;color:#373d3f;font-weight:400;transform:scaleX(0.9853);transform-origin:0 0;"><span id="tf62b2e07aa">Temperature</span></div><div style="position:absolute;left:1944.50px;top:593.50px;width:564.00px;height:457.00px;background:#fff;border:1px solid #dde3ea;border-radius:4px;"></div><div style="position:absolute;left:1626.60px;width:1200px;text-align:center;top:602.60px;white-space:nowrap;font-size:18px;line-height:18px;color:#373d3f;font-weight:400;-webkit-text-stroke:0.50px #373d3f;transform:scaleX(0.9816);transform-origin:50% 0;"><span id="td71ea6d3ce">Consommations journalieres Le Crotoy</span></div><svg style="position:absolute;left:0;top:0" width="2536" height="1227"><line x1="2011" y1="649.8" x2="2478" y2="649.8" stroke="#e6e6e6" stroke-width="1"/><line x1="2011" y1="707.3" x2="2478" y2="707.3" stroke="#e6e6e6" stroke-width="1"/><line x1="2011" y1="764.8" x2="2478" y2="764.8" stroke="#e6e6e6" stroke-width="1"/><line x1="2011" y1="822.3" x2="2478" y2="822.3" stroke="#e6e6e6" stroke-width="1"/><line x1="2011" y1="879.8" x2="2478" y2="879.8" stroke="#e6e6e6" stroke-width="1"/><line x1="2011" y1="937.3" x2="2478" y2="937.3" stroke="#e6e6e6" stroke-width="1"/><line x1="2090.5" y1="649.8" x2="2090.5" y2="937.3" stroke="#e6e6e6" stroke-width="1"/><line x1="2224.2" y1="649.8" x2="2224.2" y2="937.3" stroke="#e6e6e6" stroke-width="1"/><line x1="2357.9" y1="649.8" x2="2357.9" y2="937.3" stroke="#e6e6e6" stroke-width="1"/><rect x="2029.8" y="678.6" width="44.7" height="206.0" fill="#7eb26d"/><rect x="2029.8" y="884.6" width="44.7" height="52.69999999999993" fill="#eab839"/><rect x="2096.4" y="768.8" width="44.7" height="107.40000000000009" fill="#7eb26d"/><rect x="2096.4" y="876.2" width="44.7" height="61.09999999999991" fill="#eab839"/><rect x="2163.1" y="849" width="44.7" height="68.70000000000005" fill="#7eb26d"/><rect x="2163.1" y="917.7" width="44.7" height="19.59999999999991" fill="#eab839"/><circle cx="2029.8" cy="678.6" r="4.6" fill="#7eb26d"/><circle cx="2029.8" cy="884.6" r="4.6" fill="#eab839"/><circle cx="2096.4" cy="768.8" r="4.6" fill="#7eb26d"/><circle cx="2096.4" cy="876.2" r="4.6" fill="#eab839"/><circle cx="2163.1" cy="849" r="4.6" fill="#7eb26d"/><circle cx="2163.1" cy="917.7" r="4.6" fill="#eab839"/><circle cx="2229.8" cy="937.3" r="4.8" fill="#eab839"/><circle cx="2296.4" cy="937.3" r="4.8" fill="#eab839"/><circle cx="2363.1" cy="937.3" r="4.8" fill="#eab839"/><rect x="1961" y="1008" width="123.5" height="31" fill="#f8f8f8"/><rect x="1963.9" y="989.2" width="16.8" height="5.5" rx="1" fill="#7eb26d"/><rect x="1963.9" y="1022.2" width="16.8" height="5.5" rx="1" fill="#eab839"/></svg><div style="position:absolute;left:804.60px;width:1200px;text-align:right;top:641.65px;white-space:nowrap;font-size:15px;line-height:15px;color:#373d3f;font-weight:400;transform:scaleX(0.9654);transform-origin:100% 0;"><span id="t9f04f731aa">50 kWh</span></div><div style="position:absolute;left:804.60px;width:1200px;text-align:right;top:699.15px;white-space:nowrap;font-size:15px;line-height:15px;color:#373d3f;font-weight:400;transform:scaleX(0.9654);transform-origin:100% 0;"><span id="t96bca24adc">40 kWh</span></div><div style="position:absolute;left:804.60px;width:1200px;text-align:right;top:756.65px;white-space:nowrap;font-size:15px;line-height:15px;color:#373d3f;font-weight:400;transform:scaleX(0.9654);transform-origin:100% 0;"><span id="t43c96b05dd">30 kWh</span></div><div style="position:absolute;left:804.60px;width:1200px;text-align:right;top:814.15px;white-space:nowrap;font-size:15px;line-height:15px;color:#373d3f;font-weight:400;transform:scaleX(0.9654);transform-origin:100% 0;"><span id="t46be6ee550">20 kWh</span></div><div style="position:absolute;left:804.60px;width:1200px;text-align:right;top:871.65px;white-space:nowrap;font-size:15px;line-height:15px;color:#373d3f;font-weight:400;transform:scaleX(0.9654);transform-origin:100% 0;"><span id="tf441fee0b2">10 kWh</span></div><div style="position:absolute;left:804.60px;width:1200px;text-align:right;top:929.15px;white-space:nowrap;font-size:15px;line-height:15px;color:#373d3f;font-weight:400;transform:scaleX(0.9938);transform-origin:100% 0;"><span id="tec5cd1bdeb">0 Wh</span></div><div style="position:absolute;left:1490.50px;width:1200px;text-align:center;top:946.85px;white-space:nowrap;font-size:15px;line-height:15px;color:#373d3f;font-weight:400;transform:scaleX(1.0441);transform-origin:50% 0;"><span id="ta63040350b">04/04</span></div><div style="position:absolute;left:1624.20px;width:1200px;text-align:center;top:946.85px;white-space:nowrap;font-size:15px;line-height:15px;color:#373d3f;font-weight:400;transform:scaleX(1.0441);transform-origin:50% 0;"><span id="t327ec6a13c">04/06</span></div><div style="position:absolute;left:1757.90px;width:1200px;text-align:center;top:946.85px;white-space:nowrap;font-size:15px;line-height:15px;color:#373d3f;font-weight:400;transform:scaleX(1.0441);transform-origin:50% 0;"><span id="t5952871e6f">04/08</span></div><div style="position:absolute;left:1993.90px;top:983.12px;white-space:nowrap;font-size:15.5px;line-height:15.5px;color:#373d3f;font-weight:400;transform:scaleX(0.9802);transform-origin:0 0;"><span id="t879214fe6d">Watt/Day HP</span></div><div style="position:absolute;left:1993.90px;top:1016.23px;white-space:nowrap;font-size:15.5px;line-height:15.5px;color:#373d3f;font-weight:400;transform:scaleX(0.9709);transform-origin:0 0;"><span id="te09316635e">Watt/Day HC</span></div><div style="position:absolute;left:2101.00px;top:1065.00px;width:418.00px;height:141.50px;background:#f9f9f9;border-radius:4px;box-shadow:0 11px 15px -7px rgba(0,0,0,0.2),0 24px 38px 3px rgba(0,0,0,0.14),0 9px 46px 8px rgba(0,0,0,0.12);"></div><div style="position:absolute;left:2121.70px;top:1098.48px;white-space:nowrap;font-size:18.5px;line-height:18.5px;color:#212121;font-weight:400;transform:scaleX(0.9396);transform-origin:0 0;"><span id="t40d650bd3e">Voulez-vous enregistrer cette connexion?</span></div><div style="position:absolute;left:2131.70px;top:1160.83px;white-space:nowrap;font-size:15.5px;line-height:15.5px;color:#03a9f4;font-weight:400;-webkit-text-stroke:0.43px #03a9f4;letter-spacing:1.8px;transform:scaleX(0.8888);transform-origin:0 0;"><span id="te0df496c59">NON MERCI</span></div><div style="position:absolute;left:2240.00px;top:1146.20px;width:263.80px;height:44.50px;background:#03a9f4;border-radius:5px;box-shadow:0 3px 1px -2px rgba(0,0,0,0.2),0 2px 2px 0 rgba(0,0,0,0.14),0 1px 5px 0 rgba(0,0,0,0.12);"></div><div style="position:absolute;left:2259.70px;top:1160.83px;white-space:nowrap;font-size:15.5px;line-height:15.5px;color:#fff;font-weight:400;-webkit-text-stroke:0.43px #fff;letter-spacing:1.8px;transform:scaleX(0.9057);transform-origin:0 0;"><span id="t58a5a436d4">CONNEXION AUTOMATIQUE</span></div>
</body></html>
